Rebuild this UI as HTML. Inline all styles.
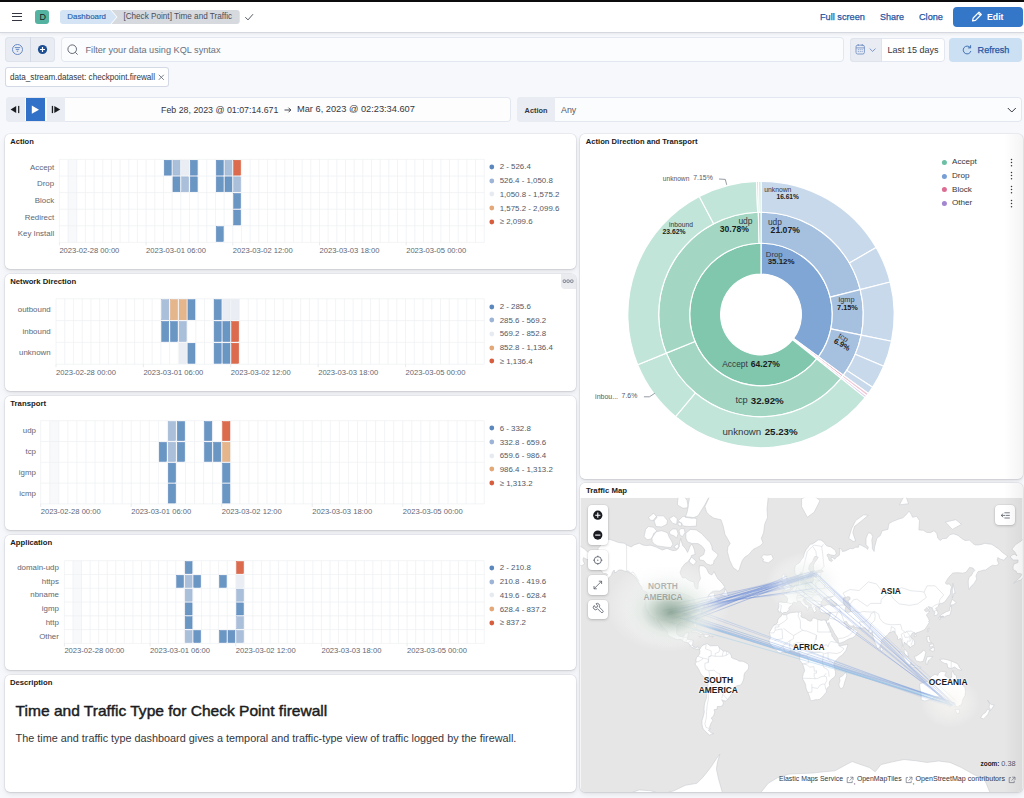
<!DOCTYPE html>
<html><head><meta charset="utf-8"><title>Dashboard</title><style>
*{box-sizing:border-box;margin:0;padding:0}
html,body{width:1024px;height:798px;overflow:hidden;background:#f7f8fc;font-family:"Liberation Sans",sans-serif;color:#343741;position:relative}
.a{position:absolute}
.t{position:absolute;white-space:nowrap}
svg{position:absolute;overflow:visible}
.panel{position:absolute;background:#fff;border-radius:5px;box-shadow:0 0 0 .6px rgba(120,130,150,.16),0 .8px 1.5px rgba(0,0,0,.07),0 2px 4px rgba(0,0,0,.05),0 4px 9px rgba(0,0,0,.04)}
</style></head><body>
<div class="a" style="left:0px;top:0px;width:1024px;height:2px;background:#0c0c0e"></div>
<div class="a" style="left:0px;top:2px;width:1024px;height:30.8px;background:#fff;border-bottom:1px solid #d5d8de;box-shadow:0 1px 3px rgba(0,0,0,.07)"></div>
<div class="a" style="left:12.3px;top:12.75px;width:9.9px;height:1.1px;background:#343741"></div>
<div class="a" style="left:12.3px;top:16.35px;width:9.9px;height:1.1px;background:#343741"></div>
<div class="a" style="left:12.3px;top:20.05px;width:9.9px;height:1.1px;background:#343741"></div>
<div class="a" style="left:35.2px;top:9.9px;width:14.3px;height:14.2px;background:#54b3a0;border-radius:3px"></div>
<div class="t" style="left:39.5px;top:12.7px;font-size:9px;line-height:9px;color:#1a1c21;">D</div>
<svg class="a" style="left:0;top:0" width="260" height="32"><path d="M63 9.9 H110.5 L116.5 17 L110.5 24.1 H63 Q60 24.1 60 21.1 V12.9 Q60 9.9 63 9.9Z" fill="#d4e4f4"/><path d="M111.5 9.9 H236.7 Q239.7 9.9 239.7 12.9 V21.1 Q239.7 24.1 236.7 24.1 H111.5 L117.5 17Z" fill="#d6d9de"/><path d="M245.3 17.2 L248 19.9 L253 14.2" stroke="#535966" stroke-width="1" fill="none"/></svg>
<div class="t" style="left:67.3px;top:13.13px;font-size:7.91px;line-height:7.91px;color:#2a5fab;-webkit-text-stroke:.15px #2a5fab">Dashboard</div>
<div class="t" style="left:123.4px;top:13.01px;font-size:8.17px;line-height:8.17px;color:#4a4f5a;">[Check Point] Time and Traffic</div>
<div class="t" style="left:820px;top:13px;font-size:9.2px;line-height:9.2px;color:#1f56a3;-webkit-text-stroke:.25px #1f56a3">Full screen</div>
<div class="t" style="left:880px;top:13.11px;font-size:8.99px;line-height:8.99px;color:#1f56a3;-webkit-text-stroke:.25px #1f56a3">Share</div>
<div class="t" style="left:919px;top:13.02px;font-size:9.18px;line-height:9.18px;color:#1f56a3;-webkit-text-stroke:.25px #1f56a3">Clone</div>
<div class="a" style="left:953px;top:7.2px;width:69.5px;height:19.5px;background:#3476c8;border-radius:4px"></div>
<svg class="a" style="left:970px;top:11px" width="14" height="12"><path d="M2.5 9.8 L3.2 7 L9 1.2 L11.3 3.5 L5.5 9.3 Z M8 2.2 L10.3 4.5" stroke="#fff" stroke-width="1.2" fill="none" stroke-linejoin="round"/></svg>
<div class="t" style="left:987px;top:13.24px;font-size:8.73px;line-height:8.73px;color:#ffffff;font-weight:700;">Edit</div>
<div class="a" style="left:5px;top:37.2px;width:50.2px;height:24.8px;background:#e9edf3;border-radius:4px;box-shadow:inset 0 0 0 1px #dfe4ec"></div>
<div class="a" style="left:30.3px;top:37.2px;width:0.6px;height:24.8px;background:#d3dae6"></div>
<svg class="a" style="left:10px;top:42px" width="16" height="16"><circle cx="7.5" cy="7.5" r="5" stroke="#5a7fc0" stroke-width="0.9" fill="none"/><path d="M4.8 5.6 H10.2 M5.8 7.4 H9.2 M6.8 9.2 H8.2" stroke="#5a7fc0" stroke-width="0.9"/></svg>
<svg class="a" style="left:35px;top:42px" width="16" height="16"><circle cx="7.5" cy="7.5" r="4.6" fill="#1c4e93"/><path d="M7.5 5 V10 M5 7.5 H10" stroke="#fff" stroke-width="1.2"/></svg>
<div class="a" style="left:60.7px;top:37.2px;width:783px;height:24.8px;background:#fbfcfd;border-radius:4px;box-shadow:inset 0 0 0 1px #e3e8f0"></div>
<svg class="a" style="left:66px;top:43px" width="14" height="14"><circle cx="6.2" cy="6.2" r="4.3" stroke="#535966" stroke-width="0.9" fill="none"/><path d="M9.3 9.3 L11.6 11.6" stroke="#535966" stroke-width="0.9"/></svg>
<div class="t" style="left:85.5px;top:46.02px;font-size:9.17px;line-height:9.17px;color:#69707d;">Filter your data using KQL syntax</div>
<div class="a" style="left:850px;top:37.6px;width:94.5px;height:24.1px;background:#fff;border-radius:4px;box-shadow:inset 0 0 0 1px #e3e8f0"></div>
<div class="a" style="left:850px;top:37.6px;width:32px;height:24.1px;background:#e9edf3;border-radius:4px 0 0 4px;box-shadow:inset 0 0 0 1px #dfe4ec"></div>
<svg class="a" style="left:853px;top:43px" width="28" height="14"><rect x="3" y="2.2" width="8.4" height="8.8" rx="1.6" stroke="#6d8bc2" stroke-width="0.85" fill="none"/><path d="M3 4.9 H11.4 M5.2 1 V3 M9.2 1 V3" stroke="#6d8bc2" stroke-width="0.85"/><path d="M4.8 6.7h1.1M6.7 6.7h1.1M8.6 6.7h1.1M4.8 8.6h1.1M6.7 8.6h1.1M8.6 8.6h1.1" stroke="#6d8bc2" stroke-width="0.8"/><path d="M16.7 5.6 L19.6 8.4 L22.5 5.6" stroke="#6d8bc2" stroke-width="0.9" fill="none"/></svg>
<div class="t" style="left:887.5px;top:45.71px;font-size:8.99px;line-height:8.99px;color:#343741;">Last 15 days</div>
<div class="a" style="left:949.4px;top:37.6px;width:73.1px;height:24.1px;background:#cce0f3;border-radius:4px"></div>
<svg class="a" style="left:961px;top:44px" width="12" height="12"><path d="M9.2 3.6 A3.9 3.9 0 1 0 9.9 7" stroke="#2a5ea8" stroke-width="0.85" fill="none"/><path d="M9.6 1.2 V3.9 H6.9" stroke="#2a5ea8" stroke-width="0.85" fill="none"/></svg>
<div class="t" style="left:977.6px;top:45.56px;font-size:9.09px;line-height:9.09px;color:#1f56a3;-webkit-text-stroke:.25px #1f56a3">Refresh</div>
<div class="a" style="left:5.3px;top:67.4px;width:164.2px;height:19.4px;background:#fff;border-radius:3px;box-shadow:inset 0 0 0 1px #d3dae6"></div>
<div class="t" style="left:10px;top:73.93px;font-size:8.13px;line-height:8.13px;color:#343741;">data_stream.dataset: checkpoint.firewall</div>
<svg class="a" style="left:157px;top:73px" width="9" height="9"><path d="M1.8 1.8 L6.8 6.8 M6.8 1.8 L1.8 6.8" stroke="#69707d" stroke-width="0.9"/></svg>
<div class="a" style="left:5.5px;top:97.2px;width:505.2px;height:24.5px;background:#fdfdfe;border-radius:4px;box-shadow:inset 0 0 0 1px #e3e8f0"></div>
<div class="a" style="left:5.5px;top:97.2px;width:19.1px;height:24.5px;background:#e9edf3;border-radius:4px 0 0 4px"></div>
<div class="a" style="left:25.9px;top:97.8px;width:19px;height:23.1px;background:#3271c8"></div>
<div class="a" style="left:46.5px;top:97.2px;width:18.5px;height:24.5px;background:#e9edf3"></div>
<svg class="a" style="left:5px;top:97px" width="62" height="25"><path d="M5.6 12.5 L11.2 8.9 V16.1 Z" fill="#1a1c21"/><rect x="13.1" y="8.9" width="1.2" height="7.2" fill="#1a1c21"/><path d="M26.8 8.6 L34 12.7 L26.8 16.75 Z" fill="#fff"/><rect x="46.8" y="8.9" width="1.3" height="7.2" fill="#1a1c21"/><path d="M49.3 8.9 L55.25 12.5 L49.3 16.1 Z" fill="#1a1c21"/></svg>
<div class="t" style="left:161px;top:105.69px;font-size:8.83px;line-height:8.83px;color:#343741;">Feb 28, 2023 @ 01:07:14.671</div>
<svg class="a" style="left:282px;top:106px" width="12" height="8"><path d="M2.5 4 H8.8 M6.5 1.7 L8.8 4 L6.5 6.3" stroke="#343741" stroke-width="0.9" fill="none"/></svg>
<div class="t" style="left:297px;top:105.48px;font-size:9.26px;line-height:9.26px;color:#343741;">Mar 6, 2023 @ 02:23:34.607</div>
<div class="a" style="left:516.6px;top:97.2px;width:505.7px;height:24.5px;background:#fbfcfd;border-radius:4px;box-shadow:inset 0 0 0 1px #e3e8f0"></div>
<div class="a" style="left:516.6px;top:97.2px;width:38.2px;height:24.5px;background:#e9edf3;border-radius:4px 0 0 4px"></div>
<div class="t" style="left:524.6px;top:106.52px;font-size:7.33px;line-height:7.33px;color:#343741;font-weight:700;">Action</div>
<div class="t" style="left:561px;top:105.67px;font-size:8.87px;line-height:8.87px;color:#535966;">Any</div>
<svg class="a" style="left:1006px;top:105.6px" width="12" height="9"><path d="M1.8 2 L5.8 6 L9.8 2" stroke="#343741" stroke-width="1" fill="none"/></svg>
<div class="panel" style="left:4.8px;top:134px;width:571.1px;height:135.1px"></div>
<div class="t" style="left:10.3px;top:138.41px;font-size:7.56px;line-height:7.56px;color:#1a1c21;font-weight:700;">Action</div>
<svg class="a" style="left:0;top:0" width="1024" height="798"><rect x="68.07" y="159.4" width="8.67" height="83" fill="#f8f9fb"/><path d="M59.4 159.4V242.4M68.07 159.4V242.4M76.74 159.4V242.4M85.41 159.4V242.4M94.08 159.4V242.4M102.75 159.4V242.4M111.42 159.4V242.4M120.09 159.4V242.4M128.76 159.4V242.4M137.42 159.4V242.4M146.09 159.4V242.4M154.76 159.4V242.4M163.43 159.4V242.4M172.1 159.4V242.4M180.77 159.4V242.4M189.44 159.4V242.4M198.11 159.4V242.4M206.78 159.4V242.4M215.45 159.4V242.4M224.12 159.4V242.4M232.79 159.4V242.4M241.46 159.4V242.4M250.13 159.4V242.4M258.8 159.4V242.4M267.47 159.4V242.4M276.13 159.4V242.4M284.8 159.4V242.4M293.47 159.4V242.4M302.14 159.4V242.4M310.81 159.4V242.4M319.48 159.4V242.4M328.15 159.4V242.4M336.82 159.4V242.4M345.49 159.4V242.4M354.16 159.4V242.4M362.83 159.4V242.4M371.5 159.4V242.4M380.17 159.4V242.4M388.84 159.4V242.4M397.51 159.4V242.4M406.18 159.4V242.4M414.84 159.4V242.4M423.51 159.4V242.4M432.18 159.4V242.4M440.85 159.4V242.4M449.52 159.4V242.4M458.19 159.4V242.4M466.86 159.4V242.4M475.53 159.4V242.4M484.2 159.4V242.4M59.4 159.4H484.2M59.4 176H484.2M59.4 192.6H484.2M59.4 209.2H484.2M59.4 225.8H484.2M59.4 242.4H484.2" stroke="#edf0f3" stroke-width="0.75" fill="none"/><path d="M59.4 242.4V245.4M146.09 242.4V245.4M232.79 242.4V245.4M319.48 242.4V245.4M406.18 242.4V245.4" stroke="#e3e6ea" stroke-width="0.8"/><rect x="164.28" y="160.25" width="6.97" height="14.9" fill="#6a96c4" stroke="#5c88bd" stroke-width=".5"/><rect x="172.95" y="160.25" width="6.97" height="14.9" fill="#a9bfda" stroke="#9db4d4" stroke-width=".5"/><rect x="181.62" y="160.25" width="6.97" height="14.9" fill="#eaeef4" stroke="#e2e7ef" stroke-width=".5"/><rect x="190.29" y="160.25" width="6.97" height="14.9" fill="#6a96c4" stroke="#5c88bd" stroke-width=".5"/><rect x="216.3" y="160.25" width="6.97" height="14.9" fill="#6a96c4" stroke="#5c88bd" stroke-width=".5"/><rect x="224.97" y="160.25" width="6.97" height="14.9" fill="#a9bfda" stroke="#9db4d4" stroke-width=".5"/><rect x="233.64" y="160.25" width="6.97" height="14.9" fill="#dc6a4c" stroke="#d45a3c" stroke-width=".5"/><rect x="172.95" y="176.85" width="6.97" height="14.9" fill="#6a96c4" stroke="#5c88bd" stroke-width=".5"/><rect x="181.62" y="176.85" width="6.97" height="14.9" fill="#a9bfda" stroke="#9db4d4" stroke-width=".5"/><rect x="190.29" y="176.85" width="6.97" height="14.9" fill="#6a96c4" stroke="#5c88bd" stroke-width=".5"/><rect x="216.3" y="176.85" width="6.97" height="14.9" fill="#6a96c4" stroke="#5c88bd" stroke-width=".5"/><rect x="224.97" y="176.85" width="6.97" height="14.9" fill="#6a96c4" stroke="#5c88bd" stroke-width=".5"/><rect x="233.64" y="176.85" width="6.97" height="14.9" fill="#a9bfda" stroke="#9db4d4" stroke-width=".5"/><rect x="233.64" y="193.45" width="6.97" height="14.9" fill="#6a96c4" stroke="#5c88bd" stroke-width=".5"/><rect x="233.64" y="210.05" width="6.97" height="14.9" fill="#6a96c4" stroke="#5c88bd" stroke-width=".5"/><rect x="216.3" y="226.65" width="6.97" height="14.9" fill="#6a96c4" stroke="#5c88bd" stroke-width=".5"/></svg>
<div class="t" style="left:30.07px;top:163.84px;font-size:7.9px;line-height:7.9px;color:#616773;">Accept</div>
<div class="t" style="left:37.06px;top:180.44px;font-size:7.9px;line-height:7.9px;color:#616773;">Drop</div>
<div class="t" style="left:34.84px;top:197.04px;font-size:7.9px;line-height:7.9px;color:#616773;">Block</div>
<div class="t" style="left:24.77px;top:213.64px;font-size:7.9px;line-height:7.9px;color:#616773;">Redirect</div>
<div class="t" style="left:17.74px;top:230.24px;font-size:7.9px;line-height:7.9px;color:#616773;">Key Install</div>
<div class="t" style="left:59.4px;top:246.69px;font-size:7.6px;line-height:7.6px;color:#616773;">2023-02-28 00:00</div>
<div class="t" style="left:146.09px;top:246.69px;font-size:7.6px;line-height:7.6px;color:#616773;">2023-03-01 06:00</div>
<div class="t" style="left:232.79px;top:246.69px;font-size:7.6px;line-height:7.6px;color:#616773;">2023-03-02 12:00</div>
<div class="t" style="left:319.48px;top:246.69px;font-size:7.6px;line-height:7.6px;color:#616773;">2023-03-03 18:00</div>
<div class="t" style="left:406.18px;top:246.69px;font-size:7.6px;line-height:7.6px;color:#616773;">2023-03-05 00:00</div>
<svg class="a" style="left:488px;top:162.9px" width="8" height="8"><circle cx="3.8" cy="4" r="2.4" fill="#5b87bd"/></svg>
<div class="t" style="left:499.7px;top:163.44px;font-size:7.9px;line-height:7.9px;color:#535966;">2 - 526.4</div>
<svg class="a" style="left:488px;top:176.7px" width="8" height="8"><circle cx="3.8" cy="4" r="2.4" fill="#9db4d6"/></svg>
<div class="t" style="left:499.7px;top:177.24px;font-size:7.9px;line-height:7.9px;color:#535966;">526.4 - 1,050.8</div>
<svg class="a" style="left:488px;top:190.4px" width="8" height="8"><circle cx="3.8" cy="4" r="2.4" fill="#e6ebf2"/></svg>
<div class="t" style="left:499.7px;top:190.94px;font-size:7.9px;line-height:7.9px;color:#535966;">1,050.8 - 1,575.2</div>
<svg class="a" style="left:488px;top:204.2px" width="8" height="8"><circle cx="3.8" cy="4" r="2.4" fill="#e2a878"/></svg>
<div class="t" style="left:499.7px;top:204.74px;font-size:7.9px;line-height:7.9px;color:#535966;">1,575.2 - 2,099.6</div>
<svg class="a" style="left:488px;top:217.7px" width="8" height="8"><circle cx="3.8" cy="4" r="2.4" fill="#d65e3e"/></svg>
<div class="t" style="left:499.7px;top:218.24px;font-size:7.9px;line-height:7.9px;color:#535966;">≥ 2,099.6</div>
<div class="panel" style="left:4.8px;top:273.75px;width:571.1px;height:117.25px"></div>
<div class="t" style="left:10.3px;top:277.64px;font-size:7.7px;line-height:7.7px;color:#1a1c21;font-weight:700;">Network Direction</div>
<div class="a" style="left:561px;top:273.75px;width:14.5px;height:14.85px;background:#e9ebef;border-radius:0 5px 0 4px"></div>
<svg class="a" style="left:562px;top:279px" width="13" height="5"><rect x="1.2" y="0.9" width="2.4" height="2.6" rx="0.6" stroke="#69707d" stroke-width="0.8" fill="none"/><rect x="4.9" y="0.9" width="2.4" height="2.6" rx="0.6" stroke="#69707d" stroke-width="0.8" fill="none"/><rect x="8.6" y="0.9" width="2.4" height="2.6" rx="0.6" stroke="#69707d" stroke-width="0.8" fill="none"/></svg>
<svg class="a" style="left:0;top:0" width="1024" height="798"><path d="M56 298.8V364.2M64.74 298.8V364.2M73.48 298.8V364.2M82.22 298.8V364.2M90.96 298.8V364.2M99.69 298.8V364.2M108.43 298.8V364.2M117.17 298.8V364.2M125.91 298.8V364.2M134.65 298.8V364.2M143.39 298.8V364.2M152.13 298.8V364.2M160.87 298.8V364.2M169.6 298.8V364.2M178.34 298.8V364.2M187.08 298.8V364.2M195.82 298.8V364.2M204.56 298.8V364.2M213.3 298.8V364.2M222.04 298.8V364.2M230.78 298.8V364.2M239.51 298.8V364.2M248.25 298.8V364.2M256.99 298.8V364.2M265.73 298.8V364.2M274.47 298.8V364.2M283.21 298.8V364.2M291.95 298.8V364.2M300.69 298.8V364.2M309.42 298.8V364.2M318.16 298.8V364.2M326.9 298.8V364.2M335.64 298.8V364.2M344.38 298.8V364.2M353.12 298.8V364.2M361.86 298.8V364.2M370.6 298.8V364.2M379.33 298.8V364.2M388.07 298.8V364.2M396.81 298.8V364.2M405.55 298.8V364.2M414.29 298.8V364.2M423.03 298.8V364.2M431.77 298.8V364.2M440.51 298.8V364.2M449.24 298.8V364.2M457.98 298.8V364.2M466.72 298.8V364.2M475.46 298.8V364.2M484.2 298.8V364.2M56 298.8H484.2M56 320.6H484.2M56 342.4H484.2M56 364.2H484.2" stroke="#edf0f3" stroke-width="0.75" fill="none"/><path d="M56 364.2V367.2M143.39 364.2V367.2M230.78 364.2V367.2M318.16 364.2V367.2M405.55 364.2V367.2" stroke="#e3e6ea" stroke-width="0.8"/><rect x="161.72" y="299.65" width="7.04" height="20.1" fill="#a9bfda" stroke="#9db4d4" stroke-width=".5"/><rect x="170.45" y="299.65" width="7.04" height="20.1" fill="#e5b58c" stroke="#dca67a" stroke-width=".5"/><rect x="179.19" y="299.65" width="7.04" height="20.1" fill="#e5b58c" stroke="#dca67a" stroke-width=".5"/><rect x="187.93" y="299.65" width="7.04" height="20.1" fill="#6a96c4" stroke="#5c88bd" stroke-width=".5"/><rect x="214.15" y="299.65" width="7.04" height="20.1" fill="#6a96c4" stroke="#5c88bd" stroke-width=".5"/><rect x="222.89" y="299.65" width="7.04" height="20.1" fill="#eaeef4" stroke="#e2e7ef" stroke-width=".5"/><rect x="231.63" y="299.65" width="7.04" height="20.1" fill="#eaeef4" stroke="#e2e7ef" stroke-width=".5"/><rect x="161.72" y="321.45" width="7.04" height="20.1" fill="#6a96c4" stroke="#5c88bd" stroke-width=".5"/><rect x="170.45" y="321.45" width="7.04" height="20.1" fill="#6a96c4" stroke="#5c88bd" stroke-width=".5"/><rect x="179.19" y="321.45" width="7.04" height="20.1" fill="#a9bfda" stroke="#9db4d4" stroke-width=".5"/><rect x="214.15" y="321.45" width="7.04" height="20.1" fill="#6a96c4" stroke="#5c88bd" stroke-width=".5"/><rect x="222.89" y="321.45" width="7.04" height="20.1" fill="#6a96c4" stroke="#5c88bd" stroke-width=".5"/><rect x="231.63" y="321.45" width="7.04" height="20.1" fill="#dc6a4c" stroke="#d45a3c" stroke-width=".5"/><rect x="179.19" y="343.25" width="7.04" height="20.1" fill="#eaeef4" stroke="#e2e7ef" stroke-width=".5"/><rect x="187.93" y="343.25" width="7.04" height="20.1" fill="#6a96c4" stroke="#5c88bd" stroke-width=".5"/><rect x="214.15" y="343.25" width="7.04" height="20.1" fill="#6a96c4" stroke="#5c88bd" stroke-width=".5"/><rect x="222.89" y="343.25" width="7.04" height="20.1" fill="#6a96c4" stroke="#5c88bd" stroke-width=".5"/><rect x="231.63" y="343.25" width="7.04" height="20.1" fill="#dc6a4c" stroke="#d45a3c" stroke-width=".5"/></svg>
<div class="t" style="left:17.76px;top:305.84px;font-size:7.9px;line-height:7.9px;color:#616773;">outbound</div>
<div class="t" style="left:22.58px;top:327.64px;font-size:7.9px;line-height:7.9px;color:#616773;">inbound</div>
<div class="t" style="left:19.06px;top:349.44px;font-size:7.9px;line-height:7.9px;color:#616773;">unknown</div>
<div class="t" style="left:56px;top:368.79px;font-size:7.6px;line-height:7.6px;color:#616773;">2023-02-28 00:00</div>
<div class="t" style="left:143.39px;top:368.79px;font-size:7.6px;line-height:7.6px;color:#616773;">2023-03-01 06:00</div>
<div class="t" style="left:230.78px;top:368.79px;font-size:7.6px;line-height:7.6px;color:#616773;">2023-03-02 12:00</div>
<div class="t" style="left:318.16px;top:368.79px;font-size:7.6px;line-height:7.6px;color:#616773;">2023-03-03 18:00</div>
<div class="t" style="left:405.55px;top:368.79px;font-size:7.6px;line-height:7.6px;color:#616773;">2023-03-05 00:00</div>
<svg class="a" style="left:488px;top:302.6px" width="8" height="8"><circle cx="3.8" cy="4" r="2.4" fill="#5b87bd"/></svg>
<div class="t" style="left:499.7px;top:303.14px;font-size:7.9px;line-height:7.9px;color:#535966;">2 - 285.6</div>
<svg class="a" style="left:488px;top:316.1px" width="8" height="8"><circle cx="3.8" cy="4" r="2.4" fill="#9db4d6"/></svg>
<div class="t" style="left:499.7px;top:316.64px;font-size:7.9px;line-height:7.9px;color:#535966;">285.6 - 569.2</div>
<svg class="a" style="left:488px;top:329.9px" width="8" height="8"><circle cx="3.8" cy="4" r="2.4" fill="#e6ebf2"/></svg>
<div class="t" style="left:499.7px;top:330.44px;font-size:7.9px;line-height:7.9px;color:#535966;">569.2 - 852.8</div>
<svg class="a" style="left:488px;top:343.6px" width="8" height="8"><circle cx="3.8" cy="4" r="2.4" fill="#e2a878"/></svg>
<div class="t" style="left:499.7px;top:344.14px;font-size:7.9px;line-height:7.9px;color:#535966;">852.8 - 1,136.4</div>
<svg class="a" style="left:488px;top:357.1px" width="8" height="8"><circle cx="3.8" cy="4" r="2.4" fill="#d65e3e"/></svg>
<div class="t" style="left:499.7px;top:357.64px;font-size:7.9px;line-height:7.9px;color:#535966;">≥ 1,136.4</div>
<div class="panel" style="left:4.8px;top:395.9px;width:571.1px;height:133.7px"></div>
<div class="t" style="left:10.3px;top:399.72px;font-size:7.74px;line-height:7.74px;color:#1a1c21;font-weight:700;">Transport</div>
<svg class="a" style="left:0;top:0" width="1024" height="798"><rect x="49.75" y="420.7" width="9.05" height="83.2" fill="#f8f9fb"/><path d="M40.7 420.7V503.9M49.75 420.7V503.9M58.8 420.7V503.9M67.85 420.7V503.9M76.9 420.7V503.9M85.96 420.7V503.9M95.01 420.7V503.9M104.06 420.7V503.9M113.11 420.7V503.9M122.16 420.7V503.9M131.21 420.7V503.9M140.26 420.7V503.9M149.31 420.7V503.9M158.36 420.7V503.9M167.41 420.7V503.9M176.47 420.7V503.9M185.52 420.7V503.9M194.57 420.7V503.9M203.62 420.7V503.9M212.67 420.7V503.9M221.72 420.7V503.9M230.77 420.7V503.9M239.82 420.7V503.9M248.87 420.7V503.9M257.92 420.7V503.9M266.98 420.7V503.9M276.03 420.7V503.9M285.08 420.7V503.9M294.13 420.7V503.9M303.18 420.7V503.9M312.23 420.7V503.9M321.28 420.7V503.9M330.33 420.7V503.9M339.38 420.7V503.9M348.43 420.7V503.9M357.49 420.7V503.9M366.54 420.7V503.9M375.59 420.7V503.9M384.64 420.7V503.9M393.69 420.7V503.9M402.74 420.7V503.9M411.79 420.7V503.9M420.84 420.7V503.9M429.89 420.7V503.9M438.94 420.7V503.9M448 420.7V503.9M457.05 420.7V503.9M466.1 420.7V503.9M475.15 420.7V503.9M484.2 420.7V503.9M40.7 420.7H484.2M40.7 441.5H484.2M40.7 462.3H484.2M40.7 483.1H484.2M40.7 503.9H484.2" stroke="#edf0f3" stroke-width="0.75" fill="none"/><path d="M40.7 503.9V506.9M131.21 503.9V506.9M221.72 503.9V506.9M312.23 503.9V506.9M402.74 503.9V506.9" stroke="#e3e6ea" stroke-width="0.8"/><rect x="168.26" y="421.55" width="7.35" height="19.1" fill="#a9bfda" stroke="#9db4d4" stroke-width=".5"/><rect x="177.32" y="421.55" width="7.35" height="19.1" fill="#6a96c4" stroke="#5c88bd" stroke-width=".5"/><rect x="204.47" y="421.55" width="7.35" height="19.1" fill="#6a96c4" stroke="#5c88bd" stroke-width=".5"/><rect x="222.57" y="421.55" width="7.35" height="19.1" fill="#dc6a4c" stroke="#d45a3c" stroke-width=".5"/><rect x="159.21" y="442.35" width="7.35" height="19.1" fill="#6a96c4" stroke="#5c88bd" stroke-width=".5"/><rect x="168.26" y="442.35" width="7.35" height="19.1" fill="#a9bfda" stroke="#9db4d4" stroke-width=".5"/><rect x="177.32" y="442.35" width="7.35" height="19.1" fill="#6a96c4" stroke="#5c88bd" stroke-width=".5"/><rect x="204.47" y="442.35" width="7.35" height="19.1" fill="#6a96c4" stroke="#5c88bd" stroke-width=".5"/><rect x="213.52" y="442.35" width="7.35" height="19.1" fill="#6a96c4" stroke="#5c88bd" stroke-width=".5"/><rect x="222.57" y="442.35" width="7.35" height="19.1" fill="#e5b58c" stroke="#dca67a" stroke-width=".5"/><rect x="168.26" y="463.15" width="7.35" height="19.1" fill="#6a96c4" stroke="#5c88bd" stroke-width=".5"/><rect x="222.57" y="463.15" width="7.35" height="19.1" fill="#6a96c4" stroke="#5c88bd" stroke-width=".5"/><rect x="168.26" y="483.95" width="7.35" height="19.1" fill="#6a96c4" stroke="#5c88bd" stroke-width=".5"/><rect x="222.57" y="483.95" width="7.35" height="19.1" fill="#6a96c4" stroke="#5c88bd" stroke-width=".5"/></svg>
<div class="t" style="left:22.81px;top:427.24px;font-size:7.9px;line-height:7.9px;color:#616773;">udp</div>
<div class="t" style="left:25.45px;top:448.04px;font-size:7.9px;line-height:7.9px;color:#616773;">tcp</div>
<div class="t" style="left:18.86px;top:468.84px;font-size:7.9px;line-height:7.9px;color:#616773;">igmp</div>
<div class="t" style="left:19.33px;top:489.64px;font-size:7.9px;line-height:7.9px;color:#616773;">icmp</div>
<div class="t" style="left:40.7px;top:507.89px;font-size:7.6px;line-height:7.6px;color:#616773;">2023-02-28 00:00</div>
<div class="t" style="left:131.21px;top:507.89px;font-size:7.6px;line-height:7.6px;color:#616773;">2023-03-01 06:00</div>
<div class="t" style="left:221.72px;top:507.89px;font-size:7.6px;line-height:7.6px;color:#616773;">2023-03-02 12:00</div>
<div class="t" style="left:312.23px;top:507.89px;font-size:7.6px;line-height:7.6px;color:#616773;">2023-03-03 18:00</div>
<div class="t" style="left:402.74px;top:507.89px;font-size:7.6px;line-height:7.6px;color:#616773;">2023-03-05 00:00</div>
<svg class="a" style="left:488px;top:424.4px" width="8" height="8"><circle cx="3.8" cy="4" r="2.4" fill="#5b87bd"/></svg>
<div class="t" style="left:499.7px;top:424.94px;font-size:7.9px;line-height:7.9px;color:#535966;">6 - 332.8</div>
<svg class="a" style="left:488px;top:438.2px" width="8" height="8"><circle cx="3.8" cy="4" r="2.4" fill="#9db4d6"/></svg>
<div class="t" style="left:499.7px;top:438.74px;font-size:7.9px;line-height:7.9px;color:#535966;">332.8 - 659.6</div>
<svg class="a" style="left:488px;top:451.9px" width="8" height="8"><circle cx="3.8" cy="4" r="2.4" fill="#e6ebf2"/></svg>
<div class="t" style="left:499.7px;top:452.44px;font-size:7.9px;line-height:7.9px;color:#535966;">659.6 - 986.4</div>
<svg class="a" style="left:488px;top:465.4px" width="8" height="8"><circle cx="3.8" cy="4" r="2.4" fill="#e2a878"/></svg>
<div class="t" style="left:499.7px;top:465.94px;font-size:7.9px;line-height:7.9px;color:#535966;">986.4 - 1,313.2</div>
<svg class="a" style="left:488px;top:479.2px" width="8" height="8"><circle cx="3.8" cy="4" r="2.4" fill="#d65e3e"/></svg>
<div class="t" style="left:499.7px;top:479.74px;font-size:7.9px;line-height:7.9px;color:#535966;">≥ 1,313.2</div>
<div class="panel" style="left:4.8px;top:535px;width:571.1px;height:134.6px"></div>
<div class="t" style="left:10.3px;top:539.14px;font-size:7.7px;line-height:7.7px;color:#1a1c21;font-weight:700;">Application</div>
<svg class="a" style="left:0;top:0" width="1024" height="798"><rect x="72.97" y="560.7" width="8.57" height="82.7" fill="#f8f9fb"/><path d="M64.4 560.7V643.4M72.97 560.7V643.4M81.53 560.7V643.4M90.1 560.7V643.4M98.67 560.7V643.4M107.24 560.7V643.4M115.8 560.7V643.4M124.37 560.7V643.4M132.94 560.7V643.4M141.51 560.7V643.4M150.07 560.7V643.4M158.64 560.7V643.4M167.21 560.7V643.4M175.78 560.7V643.4M184.34 560.7V643.4M192.91 560.7V643.4M201.48 560.7V643.4M210.04 560.7V643.4M218.61 560.7V643.4M227.18 560.7V643.4M235.75 560.7V643.4M244.31 560.7V643.4M252.88 560.7V643.4M261.45 560.7V643.4M270.02 560.7V643.4M278.58 560.7V643.4M287.15 560.7V643.4M295.72 560.7V643.4M304.29 560.7V643.4M312.85 560.7V643.4M321.42 560.7V643.4M329.99 560.7V643.4M338.56 560.7V643.4M347.12 560.7V643.4M355.69 560.7V643.4M364.26 560.7V643.4M372.82 560.7V643.4M381.39 560.7V643.4M389.96 560.7V643.4M398.53 560.7V643.4M407.09 560.7V643.4M415.66 560.7V643.4M424.23 560.7V643.4M432.8 560.7V643.4M441.36 560.7V643.4M449.93 560.7V643.4M458.5 560.7V643.4M467.07 560.7V643.4M475.63 560.7V643.4M484.2 560.7V643.4M64.4 560.7H484.2M64.4 574.48H484.2M64.4 588.27H484.2M64.4 602.05H484.2M64.4 615.83H484.2M64.4 629.62H484.2M64.4 643.4H484.2" stroke="#edf0f3" stroke-width="0.75" fill="none"/><path d="M64.4 643.4V646.4M150.07 643.4V646.4M235.75 643.4V646.4M321.42 643.4V646.4M407.09 643.4V646.4" stroke="#e3e6ea" stroke-width="0.8"/><rect x="185.19" y="561.55" width="6.87" height="12.08" fill="#6a96c4" stroke="#5c88bd" stroke-width=".5"/><rect x="236.6" y="561.55" width="6.87" height="12.08" fill="#dc6a4c" stroke="#d45a3c" stroke-width=".5"/><rect x="176.63" y="575.33" width="6.87" height="12.08" fill="#6a96c4" stroke="#5c88bd" stroke-width=".5"/><rect x="185.19" y="575.33" width="6.87" height="12.08" fill="#a9bfda" stroke="#9db4d4" stroke-width=".5"/><rect x="193.76" y="575.33" width="6.87" height="12.08" fill="#6a96c4" stroke="#5c88bd" stroke-width=".5"/><rect x="219.46" y="575.33" width="6.87" height="12.08" fill="#6a96c4" stroke="#5c88bd" stroke-width=".5"/><rect x="236.6" y="575.33" width="6.87" height="12.08" fill="#eaeef4" stroke="#e2e7ef" stroke-width=".5"/><rect x="185.19" y="589.12" width="6.87" height="12.08" fill="#a9bfda" stroke="#9db4d4" stroke-width=".5"/><rect x="236.6" y="589.12" width="6.87" height="12.08" fill="#a9bfda" stroke="#9db4d4" stroke-width=".5"/><rect x="185.19" y="602.9" width="6.87" height="12.08" fill="#6a96c4" stroke="#5c88bd" stroke-width=".5"/><rect x="236.6" y="602.9" width="6.87" height="12.08" fill="#6a96c4" stroke="#5c88bd" stroke-width=".5"/><rect x="185.19" y="616.68" width="6.87" height="12.08" fill="#6a96c4" stroke="#5c88bd" stroke-width=".5"/><rect x="236.6" y="616.68" width="6.87" height="12.08" fill="#a9bfda" stroke="#9db4d4" stroke-width=".5"/><rect x="185.19" y="630.47" width="6.87" height="12.08" fill="#a9bfda" stroke="#9db4d4" stroke-width=".5"/><rect x="193.76" y="630.47" width="6.87" height="12.08" fill="#6a96c4" stroke="#5c88bd" stroke-width=".5"/><rect x="219.46" y="630.47" width="6.87" height="12.08" fill="#6a96c4" stroke="#5c88bd" stroke-width=".5"/><rect x="228.03" y="630.47" width="6.87" height="12.08" fill="#6a96c4" stroke="#5c88bd" stroke-width=".5"/><rect x="236.6" y="630.47" width="6.87" height="12.08" fill="#a9bfda" stroke="#9db4d4" stroke-width=".5"/></svg>
<div class="t" style="left:17.19px;top:563.73px;font-size:7.9px;line-height:7.9px;color:#616773;">domain-udp</div>
<div class="t" style="left:41.76px;top:577.52px;font-size:7.9px;line-height:7.9px;color:#616773;">https</div>
<div class="t" style="left:30.34px;top:591.3px;font-size:7.9px;line-height:7.9px;color:#616773;">nbname</div>
<div class="t" style="left:41.76px;top:605.08px;font-size:7.9px;line-height:7.9px;color:#616773;">igmp</div>
<div class="t" style="left:45.71px;top:618.87px;font-size:7.9px;line-height:7.9px;color:#616773;">http</div>
<div class="t" style="left:39.15px;top:632.65px;font-size:7.9px;line-height:7.9px;color:#616773;">Other</div>
<div class="t" style="left:64.4px;top:647.29px;font-size:7.6px;line-height:7.6px;color:#616773;">2023-02-28 00:00</div>
<div class="t" style="left:150.07px;top:647.29px;font-size:7.6px;line-height:7.6px;color:#616773;">2023-03-01 06:00</div>
<div class="t" style="left:235.75px;top:647.29px;font-size:7.6px;line-height:7.6px;color:#616773;">2023-03-02 12:00</div>
<div class="t" style="left:321.42px;top:647.29px;font-size:7.6px;line-height:7.6px;color:#616773;">2023-03-03 18:00</div>
<div class="t" style="left:407.09px;top:647.29px;font-size:7.6px;line-height:7.6px;color:#616773;">2023-03-05 00:00</div>
<svg class="a" style="left:488px;top:563.8px" width="8" height="8"><circle cx="3.8" cy="4" r="2.4" fill="#5b87bd"/></svg>
<div class="t" style="left:499.7px;top:564.34px;font-size:7.9px;line-height:7.9px;color:#535966;">2 - 210.8</div>
<svg class="a" style="left:488px;top:577.6px" width="8" height="8"><circle cx="3.8" cy="4" r="2.4" fill="#9db4d6"/></svg>
<div class="t" style="left:499.7px;top:578.14px;font-size:7.9px;line-height:7.9px;color:#535966;">210.8 - 419.6</div>
<svg class="a" style="left:488px;top:591.3px" width="8" height="8"><circle cx="3.8" cy="4" r="2.4" fill="#e6ebf2"/></svg>
<div class="t" style="left:499.7px;top:591.84px;font-size:7.9px;line-height:7.9px;color:#535966;">419.6 - 628.4</div>
<svg class="a" style="left:488px;top:605.1px" width="8" height="8"><circle cx="3.8" cy="4" r="2.4" fill="#e2a878"/></svg>
<div class="t" style="left:499.7px;top:605.64px;font-size:7.9px;line-height:7.9px;color:#535966;">628.4 - 837.2</div>
<svg class="a" style="left:488px;top:618.9px" width="8" height="8"><circle cx="3.8" cy="4" r="2.4" fill="#d65e3e"/></svg>
<div class="t" style="left:499.7px;top:619.44px;font-size:7.9px;line-height:7.9px;color:#535966;">≥ 837.2</div>
<div class="panel" style="left:4.8px;top:674.9px;width:571.1px;height:116.7px"></div>
<div class="t" style="left:9.9px;top:678.83px;font-size:7.73px;line-height:7.73px;color:#1a1c21;font-weight:700;">Description</div>
<div class="t" style="left:15.6px;top:703.3px;font-size:15.55px;line-height:15.55px;color:#1a1c21;-webkit-text-stroke:.45px #1a1c21">Time and Traffic Type for Check Point firewall</div>
<div class="t" style="left:15.6px;top:732.81px;font-size:10.83px;line-height:10.83px;color:#343741;">The time and traffic type dashboard gives a temporal and traffic-type view of traffic logged by the firewall.</div>
<div class="panel" style="left:580.4px;top:134.2px;width:442.2px;height:344.6px"></div>
<div class="t" style="left:585.8px;top:138.18px;font-size:7.61px;line-height:7.61px;color:#1a1c21;font-weight:700;">Action Direction and Transport</div>
<svg class="a" style="left:0;top:0" width="1024" height="798"><path d="M761 243.2 A71.3 71.3 0 0 1 818.39 356.81 L793.52 338.47 A40.4 40.4 0 0 0 761 274.1 Z" fill="#7fa6d5" stroke="#fff" stroke-width="1.15" stroke-linejoin="round"/><path d="M818.39 356.81 A71.3 71.3 0 0 1 817.49 358 L793.01 339.15 A40.4 40.4 0 0 0 793.52 338.47 Z" fill="#e0759b" stroke="#fff" stroke-width="1.15" stroke-linejoin="round"/><path d="M817.49 358 A71.3 71.3 0 0 1 816.72 358.98 L792.57 339.7 A40.4 40.4 0 0 0 793.01 339.15 Z" fill="#a98bd0" stroke="#fff" stroke-width="1.15" stroke-linejoin="round"/><path d="M816.72 358.98 A71.3 71.3 0 1 1 761 243.2 L761 274.1 A40.4 40.4 0 1 0 792.57 339.7 Z" fill="#80c7ad" stroke="#fff" stroke-width="1.15" stroke-linejoin="round"/><path d="M761 212.2 A102.3 102.3 0 0 1 860.22 289.58 L830.15 297.13 A71.3 71.3 0 0 0 761 243.2 Z" fill="#a6c0e0" stroke="#fff" stroke-width="1.15" stroke-linejoin="round"/><path d="M860.22 289.58 A102.3 102.3 0 0 1 861.21 335.07 L830.84 328.84 A71.3 71.3 0 0 0 830.15 297.13 Z" fill="#a6c0e0" stroke="#fff" stroke-width="1.15" stroke-linejoin="round"/><path d="M861.21 335.07 A102.3 102.3 0 0 1 843.34 375.21 L818.39 356.81 A71.3 71.3 0 0 0 830.84 328.84 Z" fill="#a6c0e0" stroke="#fff" stroke-width="1.15" stroke-linejoin="round"/><path d="M843.34 375.21 A102.3 102.3 0 0 1 842.05 376.92 L817.49 358 A71.3 71.3 0 0 0 818.39 356.81 Z" fill="#eaa3bc" stroke="#fff" stroke-width="1.15" stroke-linejoin="round"/><path d="M842.05 376.92 A102.3 102.3 0 0 1 840.95 378.32 L816.72 358.98 A71.3 71.3 0 0 0 817.49 358 Z" fill="#c4afe0" stroke="#fff" stroke-width="1.15" stroke-linejoin="round"/><path d="M840.95 378.32 A102.3 102.3 0 0 1 666.28 353.15 L694.99 341.44 A71.3 71.3 0 0 0 816.72 358.98 Z" fill="#a3d7c4" stroke="#fff" stroke-width="1.15" stroke-linejoin="round"/><path d="M666.28 353.15 A102.3 102.3 0 0 1 758.32 212.24 L759.13 243.22 A71.3 71.3 0 0 0 694.99 341.44 Z" fill="#a3d7c4" stroke="#fff" stroke-width="1.15" stroke-linejoin="round"/><path d="M758.32 212.24 A102.3 102.3 0 0 1 761 212.2 L761 243.2 A71.3 71.3 0 0 0 759.13 243.22 Z" fill="#a3d7c4" stroke="#fff" stroke-width="1.15" stroke-linejoin="round"/><path d="M761 181.3 A133.2 133.2 0 0 1 876.12 247.5 L849.42 263.04 A102.3 102.3 0 0 0 761 212.2 Z" fill="#c9d9ec" stroke="#fff" stroke-width="1.15" stroke-linejoin="round"/><path d="M876.12 247.5 A133.2 133.2 0 0 1 890.19 282.05 L860.22 289.58 A102.3 102.3 0 0 0 849.42 263.04 Z" fill="#c9d9ec" stroke="#fff" stroke-width="1.15" stroke-linejoin="round"/><path d="M890.19 282.05 A133.2 133.2 0 0 1 891.48 341.28 L861.21 335.07 A102.3 102.3 0 0 0 860.22 289.58 Z" fill="#c9d9ec" stroke="#fff" stroke-width="1.15" stroke-linejoin="round"/><path d="M891.48 341.28 A133.2 133.2 0 0 1 883.7 366.33 L855.24 354.31 A102.3 102.3 0 0 0 861.21 335.07 Z" fill="#c9d9ec" stroke="#fff" stroke-width="1.15" stroke-linejoin="round"/><path d="M883.7 366.33 A133.2 133.2 0 0 1 872.58 387.24 L846.7 370.37 A102.3 102.3 0 0 0 855.24 354.31 Z" fill="#c9d9ec" stroke="#fff" stroke-width="1.15" stroke-linejoin="round"/><path d="M872.58 387.24 A133.2 133.2 0 0 1 868.21 393.54 L843.34 375.21 A102.3 102.3 0 0 0 846.7 370.37 Z" fill="#c9d9ec" stroke="#fff" stroke-width="1.15" stroke-linejoin="round"/><path d="M868.21 393.54 A133.2 133.2 0 0 1 866.53 395.77 L842.05 376.92 A102.3 102.3 0 0 0 843.34 375.21 Z" fill="#f1c6d5" stroke="#fff" stroke-width="1.15" stroke-linejoin="round"/><path d="M866.53 395.77 A133.2 133.2 0 0 1 865.1 397.6 L840.95 378.32 A102.3 102.3 0 0 0 842.05 376.92 Z" fill="#dccfee" stroke="#fff" stroke-width="1.15" stroke-linejoin="round"/><path d="M865.1 397.6 A133.2 133.2 0 0 1 675.56 416.69 L695.38 392.98 A102.3 102.3 0 0 0 840.95 378.32 Z" fill="#c1e5d8" stroke="#fff" stroke-width="1.15" stroke-linejoin="round"/><path d="M675.56 416.69 A133.2 133.2 0 0 1 637.67 364.83 L666.28 353.15 A102.3 102.3 0 0 0 695.38 392.98 Z" fill="#c1e5d8" stroke="#fff" stroke-width="1.15" stroke-linejoin="round"/><path d="M637.67 364.83 A133.2 133.2 0 0 1 699.29 196.46 L713.6 223.84 A102.3 102.3 0 0 0 666.28 353.15 Z" fill="#c1e5d8" stroke="#fff" stroke-width="1.15" stroke-linejoin="round"/><path d="M699.29 196.46 A133.2 133.2 0 0 1 756.58 181.37 L757.61 212.26 A102.3 102.3 0 0 0 713.6 223.84 Z" fill="#c1e5d8" stroke="#fff" stroke-width="1.15" stroke-linejoin="round"/><path d="M756.58 181.37 A133.2 133.2 0 0 1 758.68 181.32 L759.21 212.22 A102.3 102.3 0 0 0 757.61 212.26 Z" fill="#c1e5d8" stroke="#fff" stroke-width="1.15" stroke-linejoin="round"/><path d="M758.68 181.32 A133.2 133.2 0 0 1 761 181.3 L761 212.2 A102.3 102.3 0 0 0 759.21 212.22 Z" fill="#c1e5d8" stroke="#fff" stroke-width="1.15" stroke-linejoin="round"/><path d="M719 179 L725.3 179.4 L726.7 184.8" stroke="#69707d" stroke-width="0.7" fill="none"/><path d="M643.9 396.8 H649.4 L654.8 393.3" stroke="#69707d" stroke-width="0.7" fill="none"/></svg>
<div class="t" style="left:662.8px;top:175.56px;font-size:6.64px;line-height:6.64px;color:#535966;">unknown</div>
<div class="t" style="left:693.3px;top:175.44px;font-size:6.88px;line-height:6.88px;color:#535966;">7.15%</div>
<div class="t" style="left:595.1px;top:392.97px;font-size:7.01px;line-height:7.01px;color:#535966;">inbou...</div>
<div class="t" style="left:621.6px;top:393.04px;font-size:6.89px;line-height:6.89px;color:#535966;">7.6%</div>
<div class="t" style="left:764.3px;top:187.19px;font-size:6.77px;line-height:6.77px;color:#343741;">unknown</div>
<div class="t" style="left:776.5px;top:194.37px;font-size:6.61px;line-height:6.61px;color:#1a1c21;font-weight:700;">16.61%</div>
<div class="t" style="left:669.1px;top:221.72px;font-size:6.71px;line-height:6.71px;color:#343741;">inbound</div>
<div class="t" style="left:662.6px;top:228.99px;font-size:6.78px;line-height:6.78px;color:#1a1c21;font-weight:700;">23.62%</div>
<div class="t" style="left:738.4px;top:216.85px;font-size:8.5px;line-height:8.5px;color:#343741;">udp</div>
<div class="t" style="left:719.8px;top:225.31px;font-size:8.58px;line-height:8.58px;color:#1a1c21;font-weight:700;">30.78%</div>
<div class="t" style="left:768px;top:217.73px;font-size:8.32px;line-height:8.32px;color:#343741;">udp</div>
<div class="t" style="left:770.6px;top:226.28px;font-size:8.64px;line-height:8.64px;color:#1a1c21;font-weight:700;">21.07%</div>
<div class="t" style="left:765.8px;top:250.8px;font-size:7.79px;line-height:7.79px;color:#343741;">Drop</div>
<div class="t" style="left:767.7px;top:258.34px;font-size:7.91px;line-height:7.91px;color:#1a1c21;font-weight:700;">35.12%</div>
<div class="t" style="left:838.6px;top:295.9px;font-size:7.37px;line-height:7.37px;color:#343741;">igmp</div>
<div class="t" style="left:837.1px;top:303.82px;font-size:7.34px;line-height:7.34px;color:#1a1c21;font-weight:700;">7.15%</div>
<div class="t" style="left:837.5px;top:333.6px;font-size:7.6px;line-height:8px;color:#343741;transform:rotate(30deg);transform-origin:50% 50%">tcp</div>
<div class="t" style="left:832.5px;top:340.6px;font-size:7.6px;line-height:8px;color:#1a1c21;font-weight:700;transform:rotate(30deg);transform-origin:50% 50%">6.9%</div>
<div class="t" style="left:722.2px;top:360.31px;font-size:8.38px;line-height:8.38px;color:#343741;">Accept</div>
<div class="t" style="left:750.8px;top:360.21px;font-size:8.58px;line-height:8.58px;color:#1a1c21;font-weight:700;">64.27%</div>
<div class="t" style="left:735.4px;top:395.96px;font-size:9.29px;line-height:9.29px;color:#343741;">tcp</div>
<div class="t" style="left:750.8px;top:395.74px;font-size:9.73px;line-height:9.73px;color:#1a1c21;font-weight:700;">32.92%</div>
<div class="t" style="left:722.4px;top:427.06px;font-size:9.71px;line-height:9.71px;color:#343741;">unknown</div>
<div class="t" style="left:764.7px;top:427.04px;font-size:9.73px;line-height:9.73px;color:#1a1c21;font-weight:700;">25.23%</div>
<svg class="a" style="left:940px;top:157.9px" width="9" height="9"><circle cx="4.4" cy="4.4" r="2.5" fill="#6cbfa5"/></svg>
<div class="t" style="left:952px;top:158.34px;font-size:8.1px;line-height:8.1px;color:#343741;">Accept</div>
<svg class="a" style="left:1009px;top:157.7px" width="5" height="10"><circle cx="2.5" cy="1.4" r="0.75" fill="#343741"/><circle cx="2.5" cy="4.6" r="0.75" fill="#343741"/><circle cx="2.5" cy="7.8" r="0.75" fill="#343741"/></svg>
<svg class="a" style="left:940px;top:171.6px" width="9" height="9"><circle cx="4.4" cy="4.4" r="2.5" fill="#789fd3"/></svg>
<div class="t" style="left:952px;top:172.04px;font-size:8.1px;line-height:8.1px;color:#343741;">Drop</div>
<svg class="a" style="left:1009px;top:171.4px" width="5" height="10"><circle cx="2.5" cy="1.4" r="0.75" fill="#343741"/><circle cx="2.5" cy="4.6" r="0.75" fill="#343741"/><circle cx="2.5" cy="7.8" r="0.75" fill="#343741"/></svg>
<svg class="a" style="left:940px;top:185.3px" width="9" height="9"><circle cx="4.4" cy="4.4" r="2.5" fill="#dc6e93"/></svg>
<div class="t" style="left:952px;top:185.74px;font-size:8.1px;line-height:8.1px;color:#343741;">Block</div>
<svg class="a" style="left:1009px;top:185.1px" width="5" height="10"><circle cx="2.5" cy="1.4" r="0.75" fill="#343741"/><circle cx="2.5" cy="4.6" r="0.75" fill="#343741"/><circle cx="2.5" cy="7.8" r="0.75" fill="#343741"/></svg>
<svg class="a" style="left:940px;top:199px" width="9" height="9"><circle cx="4.4" cy="4.4" r="2.5" fill="#a286cf"/></svg>
<div class="t" style="left:952px;top:199.44px;font-size:8.1px;line-height:8.1px;color:#343741;">Other</div>
<svg class="a" style="left:1009px;top:198.8px" width="5" height="10"><circle cx="2.5" cy="1.4" r="0.75" fill="#343741"/><circle cx="2.5" cy="4.6" r="0.75" fill="#343741"/><circle cx="2.5" cy="7.8" r="0.75" fill="#343741"/></svg>
<div class="panel" style="left:580.4px;top:482.9px;width:442.2px;height:309.1px;overflow:hidden"></div>
<div class="t" style="left:586px;top:486.7px;font-size:7.78px;line-height:7.78px;color:#1a1c21;font-weight:700;">Traffic Map</div>
<svg class="a" style="left:0;top:0" width="1024" height="798"><defs><clipPath id="mc"><path d="M580.4 497.8 H1022.6 V787 Q1022.6 792 1017.6 792 H585.4 Q580.4 792 580.4 787 Z"/></clipPath><radialGradient id="blob" cx="50%" cy="50%" r="50%"><stop offset="0" stop-color="#7f9a89" stop-opacity=".82"/><stop offset=".28" stop-color="#9bb1a3" stop-opacity=".62"/><stop offset=".6" stop-color="#dfe8e2" stop-opacity=".5"/><stop offset="1" stop-color="#f4f6f4" stop-opacity="0"/></radialGradient><radialGradient id="halo" cx="50%" cy="50%" r="50%"><stop offset="0" stop-color="#dfe9e4" stop-opacity=".7"/><stop offset=".6" stop-color="#f2f5f3" stop-opacity=".5"/><stop offset="1" stop-color="#fff" stop-opacity="0"/></radialGradient><radialGradient id="halo2" cx="50%" cy="50%" r="50%"><stop offset="0" stop-color="#f7f5ef" stop-opacity=".8"/><stop offset="1" stop-color="#fff" stop-opacity="0"/></radialGradient></defs><g clip-path="url(#mc)"><rect x="580.4" y="497.8" width="442.2" height="294.2" fill="#e6e6e6"/><path d="M364.3 612.1 L363.7 609.5 L364.5 606.9 L364.4 604.6 L363.9 603.1 L365.4 602.0 L368.3 602.3 L371.2 602.5 L372.5 602.5 L373.1 600.7 L373.2 598.2 L372.1 596.6 L369.4 595.2 L369.2 594.0 L371.2 593.5 L372.8 593.8 L373.0 592.1 L374.8 592.4 L376.3 591.0 L377.5 589.4 L378.6 588.6 L379.8 587.1 L380.4 585.4 L382.1 584.8 L384.0 584.8 L384.6 582.9 L384.3 580.9 L383.9 578.8 L384.5 577.6 L386.7 576.3 L386.5 578.8 L387.0 579.9 L386.1 581.9 L385.9 582.7 L387.3 583.9 L389.0 583.1 L390.7 584.1 L393.6 582.9 L395.9 582.5 L397.1 583.1 L398.8 581.9 L399.0 579.9 L398.8 577.8 L400.5 576.3 L401.7 577.8 L402.6 576.7 L402.7 575.0 L401.7 574.3 L401.7 572.8 L404.5 572.3 L406.8 572.3 L409.1 571.4 L407.4 570.0 L405.1 570.2 L401.1 571.4 L399.4 569.8 L399.4 567.6 L399.1 565.2 L400.3 562.6 L402.8 559.2 L404.0 557.3 L402.5 556.5 L400.5 556.5 L399.4 558.7 L398.2 561.9 L396.5 563.2 L395.1 565.2 L394.5 568.1 L394.5 569.8 L396.2 571.2 L395.9 573.0 L393.9 574.5 L393.6 577.1 L392.8 579.4 L391.3 579.9 L389.6 581.1 L389.3 579.2 L388.2 576.3 L387.5 573.7 L386.7 572.3 L386.4 573.4 L384.4 575.0 L382.7 575.6 L381.1 573.9 L380.6 572.3 L380.4 568.8 L380.9 565.9 L382.7 564.2 L385.5 562.4 L386.7 560.0 L389.0 557.3 L390.1 553.0 L391.9 549.4 L393.6 547.5 L395.9 544.2 L398.2 543.9 L401.1 541.9 L404.0 539.8 L406.8 540.1 L409.7 542.2 L410.9 544.2 L412.6 545.9 L416.6 546.9 L421.2 550.6 L422.0 553.6 L420.1 555.6 L416.6 555.0 L413.7 553.9 L412.6 555.0 L414.3 558.1 L414.8 560.3 L417.2 561.6 L418.3 560.0 L416.6 558.9 L417.4 557.0 L420.6 559.2 L421.8 557.3 L425.0 555.3 L425.5 550.6 L424.7 548.1 L427.5 549.4 L428.1 551.5 L431.0 550.9 L436.2 548.4 L438.5 548.8 L441.4 547.2 L444.2 547.2 L444.8 544.2 L447.7 545.6 L451.7 547.8 L453.4 549.4 L454.0 547.2 L451.7 544.6 L451.7 538.3 L453.7 533.4 L454.6 532.7 L456.9 533.4 L458.4 536.5 L457.5 540.1 L458.0 545.2 L458.0 548.4 L459.2 550.6 L459.8 551.5 L460.3 546.9 L462.6 538.3 L466.1 535.4 L467.8 530.7 L473.6 529.4 L474.2 526.5 L474.7 523.4 L478.2 521.6 L483.9 519.2 L488.5 517.8 L490.8 515.8 L494.9 511.1 L497.2 514.8 L498.3 517.3 L502.4 516.3 L505.2 520.6 L504.7 529.9 L509.3 530.3 L512.1 532.3 L516.2 532.7 L519.6 530.7 L522.5 533.4 L523.6 538.3 L525.9 540.5 L528.2 538.7 L532.3 538.3 L535.7 534.6 L539.2 533.8 L543.8 535.4 L547.2 538.3 L550.7 540.5 L555.3 540.1 L558.7 543.6 L561.0 544.9 L564.5 544.9 L567.9 544.2 L570.8 543.2 L573.7 543.9 L577.2 544.2 L580.0 545.9 L581.8 547.2 L584.6 549.1 L588.1 552.4 L591.0 554.5 L593.6 556.2 L591.5 557.8 L589.8 560.3 L586.4 559.2 L583.5 557.6 L582.9 560.0 L584.6 563.9 L581.8 565.7 L578.3 565.2 L574.9 567.4 L571.4 570.0 L569.7 570.0 L565.6 571.2 L563.9 571.6 L562.8 573.4 L561.6 576.1 L562.4 578.8 L560.8 581.9 L558.7 584.8 L557.0 586.0 L554.9 589.5 L554.1 585.8 L553.9 580.9 L555.1 576.7 L557.0 575.6 L558.7 572.3 L560.5 570.5 L558.7 568.1 L555.3 567.4 L551.8 572.3 L548.4 573.2 L544.9 572.8 L541.5 572.8 L538.6 573.0 L536.3 575.2 L533.4 578.8 L531.1 582.9 L532.3 584.3 L535.1 583.9 L537.3 586.8 L536.3 590.5 L536.1 594.0 L534.0 596.9 L532.3 599.4 L530.0 602.3 L527.7 603.4 L525.9 603.4 L524.8 604.2 L524.0 606.2 L522.5 607.7 L521.3 608.4 L522.5 610.4 L523.6 612.4 L523.6 614.4 L522.5 615.0 L520.2 615.8 L520.0 614.2 L520.5 612.4 L519.8 611.1 L518.8 610.9 L518.5 609.2 L517.7 607.8 L515.6 607.1 L513.9 606.5 L515.2 608.4 L514.1 609.5 L512.7 607.4 L511.0 608.9 L510.1 609.9 L511.3 611.4 L512.1 611.8 L513.6 610.9 L515.6 611.7 L513.9 613.1 L512.1 615.0 L513.3 617.0 L514.4 618.7 L514.9 620.6 L514.4 621.4 L515.0 622.4 L513.9 624.4 L512.5 626.4 L511.0 628.9 L509.3 630.2 L507.5 631.0 L505.8 631.7 L504.1 632.3 L501.8 633.0 L501.2 634.1 L500.6 632.7 L499.5 632.5 L497.7 633.5 L497.2 634.7 L496.3 636.3 L497.2 637.5 L498.3 639.0 L499.8 640.3 L500.4 642.3 L500.3 644.6 L498.9 645.5 L497.5 646.1 L495.4 648.1 L495.2 646.2 L493.7 645.7 L492.6 644.1 L490.8 643.3 L490.6 642.3 L489.7 642.6 L489.6 644.1 L488.8 645.8 L489.1 647.6 L490.2 649.6 L491.4 650.2 L492.6 651.3 L493.6 652.8 L493.7 654.8 L494.5 656.4 L493.7 656.5 L492.0 655.4 L490.8 654.5 L490.0 652.8 L489.9 650.7 L488.5 649.0 L487.7 648.2 L488.0 646.4 L488.0 644.1 L487.4 641.1 L486.9 638.7 L485.7 638.5 L484.3 639.6 L483.1 639.3 L483.4 636.9 L482.2 635.1 L480.8 633.3 L480.3 631.4 L478.8 631.0 L477.0 632.3 L474.7 632.8 L474.2 634.3 L472.4 635.4 L471.3 636.7 L469.3 638.1 L467.8 639.6 L466.9 640.5 L466.9 642.9 L466.4 645.3 L465.9 646.1 L464.6 647.7 L463.8 648.6 L462.6 647.6 L461.8 644.9 L460.7 642.9 L459.8 639.9 L459.0 637.5 L458.4 635.4 L458.3 633.3 L458.0 631.7 L455.7 633.5 L454.0 631.7 L455.2 630.9 L453.8 630.2 L452.3 629.5 L451.3 627.8 L448.8 628.0 L445.5 628.0 L443.1 627.8 L440.6 627.3 L439.5 625.6 L437.7 626.2 L436.2 626.0 L434.5 624.7 L433.1 623.2 L432.4 621.5 L430.9 621.4 L429.9 621.9 L430.4 623.8 L431.6 625.4 L432.4 626.7 L433.1 628.3 L433.9 627.0 L434.0 628.9 L435.0 629.3 L436.8 629.3 L438.5 627.6 L439.4 626.6 L439.5 628.5 L440.8 629.8 L442.0 630.0 L443.4 631.5 L442.0 633.9 L441.0 635.7 L439.6 636.9 L438.3 637.8 L435.0 638.7 L432.2 640.3 L429.9 641.7 L427.0 642.7 L424.7 643.3 L424.1 641.7 L423.8 639.3 L422.9 637.5 L421.2 635.1 L419.7 632.7 L419.3 631.4 L417.8 628.9 L416.6 627.0 L415.1 624.4 L414.7 622.4 L414.0 624.7 L412.9 623.8 L412.1 621.8 L411.8 620.2 L414.0 620.0 L414.7 618.4 L415.5 616.3 L415.9 614.2 L416.3 612.7 L414.9 612.5 L413.7 613.3 L412.0 613.4 L409.7 613.0 L408.0 612.7 L406.3 612.1 L405.9 610.7 L405.1 609.9 L405.5 608.4 L404.8 607.5 L406.3 607.1 L408.2 605.9 L410.3 606.0 L412.9 604.6 L415.1 604.6 L417.1 605.7 L418.9 606.3 L420.6 606.2 L422.4 605.4 L422.6 603.9 L421.0 602.8 L418.3 600.7 L416.7 599.2 L416.6 599.4 L414.9 600.2 L413.2 600.9 L412.0 599.2 L413.5 598.2 L415.1 597.7 L417.2 596.9 L418.9 596.4 L411.2 597.2 L409.9 597.4 L409.1 599.1 L408.7 599.9 L407.6 601.0 L406.8 602.6 L406.7 604.5 L406.8 605.3 L407.9 605.9 L405.3 606.9 L404.5 606.5 L403.4 606.3 L402.0 606.8 L400.9 606.9 L401.4 607.8 L401.0 608.7 L401.7 609.9 L402.2 610.7 L401.1 611.4 L400.6 612.8 L399.6 612.3 L399.1 611.1 L398.8 610.2 L398.2 608.7 L397.1 606.9 L396.9 604.8 L395.9 603.9 L394.8 603.1 L393.0 602.3 L391.9 600.7 L391.3 599.6 L390.4 600.0 L390.5 598.7 L388.9 599.1 L388.8 600.5 L390.1 602.1 L391.3 604.3 L393.0 604.8 L394.8 606.3 L395.9 607.5 L394.4 607.1 L394.3 609.2 L393.1 610.7 L392.7 610.2 L392.8 608.3 L391.9 607.2 L390.7 606.5 L389.0 605.4 L387.8 604.0 L386.7 603.2 L386.4 601.7 L384.7 600.9 L383.2 601.8 L382.1 602.9 L380.4 602.5 L379.2 602.3 L378.2 603.1 L378.3 604.6 L376.9 605.9 L375.5 606.5 L374.4 608.4 L374.8 609.5 L374.0 610.4 L373.5 611.2 L372.1 612.5 L369.4 612.5 L368.2 613.5 L367.2 612.4 L366.1 611.8Z M573.4 700.2 L575.4 703.2 L577.2 704.6 L580.0 704.9 L578.3 707.6 L576.2 710.7 L575.5 708.2 L574.6 707.1 L575.5 704.2Z M167.5 852.4 L167.5 809.4 L190.5 803.8 L202.0 800.2 L213.5 794.0 L225.0 789.9 L236.5 790.8 L248.0 794.0 L259.5 790.8 L271.0 785.3 L282.5 783.3 L288.3 777.7 L296.4 767.6 L302.1 758.7 L305.6 754.1 L303.3 761.5 L302.1 769.1 L304.4 779.5 L307.9 791.7 L322.8 809.4 L334.3 806.5 L343.5 796.3 L353.9 783.3 L363.1 777.7 L374.6 774.1 L386.1 773.5 L397.6 773.1 L409.1 771.8 L420.6 770.8 L432.2 764.5 L437.9 761.5 L443.7 763.6 L455.2 767.6 L460.9 771.8 L466.7 764.5 L478.2 761.8 L489.7 759.5 L501.2 760.7 L512.7 762.4 L524.2 761.0 L535.7 762.4 L547.2 767.6 L558.7 774.1 L570.2 779.5 L581.8 806.5 L581.8 852.4Z M648.5 517.3 L653.7 513.2 L657.1 517.3 L654.3 520.6 L650.2 520.2Z M677.8 522.0 L681.9 523.0 L681.3 526.1 L678.4 525.6Z M673.8 546.9 L677.3 543.9 L679.6 546.2 L676.7 548.8Z M595.6 557.0 L597.9 555.0 L600.5 554.2 L602.7 555.9 L600.6 552.1 L597.6 549.1 L601.3 544.6 L607.1 540.8 L608.7 539.0 L614.0 540.8 L618.6 542.5 L624.3 543.2 L626.6 544.9 L631.2 546.9 L634.1 544.9 L639.3 543.2 L642.7 544.9 L646.2 545.6 L650.8 545.2 L656.6 547.2 L662.3 550.0 L666.9 548.4 L672.7 550.6 L676.1 550.3 L678.4 548.4 L680.7 538.3 L682.5 545.2 L685.3 548.4 L687.6 552.4 L690.5 545.2 L692.2 544.2 L694.5 550.0 L695.1 554.5 L691.7 555.3 L689.9 560.0 L687.6 561.9 L684.8 563.9 L681.9 567.6 L680.1 572.3 L680.5 574.1 L682.5 577.8 L685.3 577.8 L688.8 580.3 L691.1 581.3 L694.0 581.9 L694.3 585.8 L696.3 589.0 L698.0 588.6 L698.2 582.9 L700.5 578.8 L699.7 574.5 L699.1 570.0 L699.4 565.7 L703.7 565.9 L706.6 568.8 L708.9 573.4 L711.8 575.0 L714.1 571.6 L715.2 573.9 L717.8 578.8 L721.0 581.9 L722.7 583.9 L724.7 586.8 L723.3 588.6 L719.9 591.0 L715.2 591.0 L712.4 591.4 L709.5 594.0 L707.8 596.6 L710.1 593.5 L713.5 592.8 L714.7 594.0 L714.1 596.6 L715.2 597.7 L718.7 598.6 L719.9 598.2 L715.8 600.5 L713.2 602.0 L712.4 600.2 L711.2 600.7 L708.3 602.0 L707.7 603.7 L708.3 605.0 L706.6 605.6 L704.1 606.3 L703.7 606.9 L703.2 608.7 L702.0 609.5 L701.4 612.1 L701.9 614.5 L700.3 615.7 L698.0 617.2 L695.9 619.1 L695.3 621.1 L696.3 624.4 L696.8 626.4 L696.3 628.0 L695.5 627.6 L694.5 626.0 L693.6 624.4 L693.4 622.8 L691.7 621.8 L689.4 621.2 L687.1 621.4 L685.9 621.5 L686.5 622.8 L683.6 622.4 L680.7 622.3 L679.0 623.4 L677.0 624.9 L676.7 627.6 L676.6 630.8 L676.4 632.0 L676.9 633.9 L678.4 635.7 L679.8 636.3 L681.9 636.5 L683.6 636.2 L684.6 635.1 L685.0 633.3 L687.6 632.7 L688.9 632.7 L688.2 634.5 L687.9 636.3 L687.3 637.5 L687.4 639.3 L689.4 639.6 L692.2 639.6 L693.2 640.7 L692.7 643.5 L692.5 645.3 L694.0 647.0 L695.7 647.8 L697.4 647.0 L699.4 647.8 L699.9 648.5 L699.3 649.7 L698.6 648.8 L696.8 649.3 L695.1 648.8 L693.4 648.4 L692.2 647.0 L690.3 646.5 L690.2 645.3 L688.2 643.0 L685.9 642.3 L683.6 641.7 L681.9 639.9 L680.1 639.1 L677.8 639.7 L675.5 639.0 L672.1 637.5 L669.8 636.6 L667.5 634.5 L667.7 632.7 L667.3 631.2 L665.2 628.9 L663.1 627.5 L661.7 625.1 L659.8 623.1 L658.7 620.7 L656.8 619.5 L657.5 621.8 L659.1 623.8 L660.6 626.4 L662.0 629.3 L663.0 630.5 L662.0 630.2 L659.9 628.5 L659.7 626.7 L657.4 624.9 L657.5 623.5 L655.6 621.4 L654.6 619.8 L654.1 618.4 L652.6 616.6 L650.1 615.5 L648.6 612.8 L647.9 610.9 L646.4 608.4 L645.7 607.1 L646.0 604.6 L645.6 602.3 L646.3 597.9 L645.4 594.2 L647.4 593.5 L646.8 592.2 L645.0 591.4 L642.2 589.9 L641.8 587.3 L639.9 584.8 L638.7 582.7 L637.6 580.9 L635.8 577.8 L633.5 575.0 L631.2 573.7 L628.0 571.8 L624.9 571.2 L621.5 570.0 L618.6 570.0 L616.9 571.8 L614.6 573.0 L614.2 570.0 L612.3 572.3 L611.7 575.0 L608.8 577.8 L606.5 579.9 L603.6 580.9 L600.7 582.5 L599.2 583.1 L602.5 580.3 L605.3 577.8 L607.6 574.5 L606.5 573.7 L602.7 573.4 L601.9 571.2 L599.0 569.8 L598.7 566.9 L599.6 563.9 L603.6 562.6 L603.9 560.0 L601.3 560.0 L598.4 560.0 L597.3 558.1Z M685.9 533.1 L690.5 529.4 L696.3 529.9 L701.4 533.4 L706.0 538.3 L710.1 542.5 L711.8 546.2 L712.4 550.0 L716.4 553.0 L718.1 555.0 L716.4 557.8 L714.1 560.5 L713.5 563.9 L710.6 565.2 L706.6 563.9 L703.7 560.5 L699.7 560.0 L699.1 557.3 L703.7 554.5 L704.9 550.0 L702.0 546.2 L698.0 543.6 L692.2 543.6 L687.6 541.9 L685.9 538.3Z M688.8 560.0 L691.7 557.3 L695.1 560.0 L696.3 561.9 L693.4 565.2 L689.9 562.6Z M652.0 538.3 L653.7 533.4 L657.1 531.5 L661.7 530.7 L667.5 532.7 L669.2 537.2 L671.5 540.8 L672.9 544.2 L670.9 547.5 L666.3 547.2 L661.7 546.5 L657.7 545.9 L654.3 544.2 L652.2 541.5Z M644.1 536.5 L645.6 529.4 L648.5 526.5 L653.7 527.3 L656.6 530.7 L653.7 535.4 L650.8 539.0 L647.1 539.8Z M653.7 519.7 L657.1 515.8 L663.5 515.8 L667.5 520.6 L666.9 524.3 L661.7 526.9 L656.0 526.5Z M669.2 531.9 L672.7 529.0 L676.7 529.0 L678.1 533.8 L676.7 538.0 L673.8 535.7 L670.4 534.6Z M679.0 530.7 L680.7 528.6 L684.2 528.6 L685.0 532.7 L682.5 536.5 L680.1 535.4Z M678.4 520.6 L683.0 516.3 L691.1 517.3 L696.8 518.7 L696.3 526.1 L689.9 526.5 L683.6 526.1Z M685.3 517.3 L692.2 518.3 L698.0 515.8 L702.0 509.5 L705.5 503.7 L710.6 494.0 L717.6 482.6 L702.6 473.7 L685.3 482.6 L683.0 494.0 L687.1 500.6 L688.2 506.6 L687.1 512.2Z M677.3 504.9 L678.4 494.0 L684.8 490.4 L689.4 498.7 L687.6 507.8 L683.0 508.3Z M669.2 518.7 L673.8 515.8 L677.3 518.7 L676.7 524.3 L672.7 523.4Z M720.7 595.5 L724.5 592.2 L725.0 588.6 L727.3 592.6 L728.3 595.7 L727.3 597.2 L724.5 595.7Z M704.9 506.6 L710.6 494.0 L719.9 482.6 L737.1 475.6 L754.4 468.9 L765.9 478.3 L775.1 486.6 L768.2 497.4 L767.0 509.5 L767.6 517.3 L764.7 524.3 L763.6 532.7 L761.3 538.3 L763.0 542.9 L760.1 545.9 L753.2 549.4 L748.6 554.7 L744.6 557.3 L742.3 560.5 L740.6 565.2 L739.4 569.3 L738.0 571.4 L736.5 570.0 L733.1 567.6 L731.4 563.9 L729.6 560.0 L728.5 555.9 L727.3 551.5 L727.9 546.9 L730.2 543.6 L727.9 539.4 L725.0 534.6 L723.3 526.5 L721.0 519.7 L714.1 518.3 L710.1 515.8 L706.6 512.2Z M761.3 557.3 L763.6 554.7 L767.6 555.3 L771.1 554.5 L772.2 555.9 L773.2 558.4 L771.6 560.5 L768.2 562.9 L764.7 561.9 L762.8 561.3 L763.6 559.2Z M691.2 632.2 L692.2 630.9 L694.5 630.5 L696.8 630.8 L699.7 632.3 L702.0 633.3 L703.5 634.3 L700.3 634.6 L699.5 633.6 L697.4 632.7 L695.1 631.9 L692.8 632.2Z M703.3 636.3 L705.1 634.6 L708.3 634.9 L710.2 636.2 L708.3 636.7 L706.6 637.4Z M711.6 636.3 L713.4 636.6 L713.2 636.9 L711.6 636.9Z M698.8 636.5 L701.2 636.7 L700.5 637.2 L698.9 636.7Z M699.9 648.5 L700.9 647.6 L702.0 645.8 L703.5 645.0 L705.5 644.3 L706.6 643.6 L708.3 644.1 L708.6 644.7 L710.4 645.8 L712.9 645.7 L715.2 645.7 L717.6 645.6 L718.7 646.4 L719.3 648.2 L720.4 648.8 L722.2 650.2 L723.3 651.1 L725.6 651.1 L727.9 651.7 L729.6 652.8 L730.2 653.6 L731.4 655.9 L731.4 657.4 L733.1 658.6 L734.2 658.9 L737.1 659.7 L738.3 660.9 L740.6 661.2 L742.9 661.3 L745.2 662.4 L747.5 663.8 L748.4 664.5 L748.7 666.7 L748.3 669.0 L746.3 671.3 L744.6 673.1 L744.0 675.5 L743.8 678.5 L743.1 680.9 L741.9 683.3 L740.6 685.2 L737.7 685.5 L735.4 686.5 L733.7 688.4 L732.9 691.6 L731.6 693.6 L730.2 696.2 L728.5 698.3 L727.3 699.9 L725.7 700.9 L723.9 700.8 L721.7 699.7 L723.1 702.2 L723.4 703.2 L722.6 705.6 L720.4 706.5 L717.3 706.5 L717.2 709.1 L714.1 709.8 L714.8 712.1 L714.1 714.2 L713.5 716.1 L711.2 718.1 L712.9 720.3 L711.2 722.9 L710.3 725.0 L709.5 727.4 L710.2 729.1 L708.3 730.2 L711.5 733.1 L713.9 733.5 L711.5 734.5 L709.5 735.1 L707.2 733.1 L704.3 730.2 L702.9 728.3 L702.0 724.6 L702.0 720.3 L702.9 717.8 L703.7 714.5 L704.3 712.1 L704.0 709.1 L704.3 705.3 L705.1 701.8 L706.4 698.3 L706.6 694.2 L706.8 690.3 L707.8 686.5 L708.1 682.7 L708.0 679.7 L706.6 678.5 L704.3 677.3 L702.0 675.5 L701.1 674.0 L699.9 671.9 L698.8 669.6 L697.4 667.0 L695.5 664.9 L695.3 663.2 L696.5 661.9 L695.8 660.5 L696.3 658.6 L696.8 657.1 L698.2 655.9 L699.6 654.0 L699.9 651.7 L699.7 649.9 L699.3 649.7Z M782.1 613.8 L783.1 614.7 L786.4 614.8 L787.7 614.1 L790.1 612.8 L792.9 612.4 L796.4 612.1 L798.7 612.3 L800.4 611.7 L801.6 612.1 L801.0 613.5 L801.6 614.7 L800.8 615.9 L801.3 616.9 L802.1 617.5 L803.9 617.9 L806.4 618.7 L807.0 619.8 L810.2 621.2 L811.9 620.6 L811.9 619.1 L813.6 618.0 L815.4 618.3 L817.7 619.5 L821.7 620.4 L823.4 619.9 L825.7 620.2 L826.3 621.8 L827.5 624.4 L828.0 626.0 L829.8 629.5 L830.3 632.0 L831.7 633.3 L831.9 636.3 L833.2 637.2 L834.4 639.9 L836.1 641.5 L837.8 642.9 L838.7 644.1 L839.5 645.8 L841.8 645.6 L844.1 645.0 L846.4 644.7 L847.8 644.3 L847.6 645.8 L847.0 647.6 L845.9 650.5 L844.1 652.8 L842.4 655.1 L839.5 656.8 L837.2 659.2 L836.1 660.3 L834.9 661.5 L834.1 663.5 L833.8 665.5 L834.4 667.2 L834.9 669.6 L835.5 671.9 L835.6 674.9 L834.4 677.3 L832.1 678.8 L829.8 680.9 L829.2 683.3 L829.8 685.8 L826.9 688.4 L826.6 690.3 L826.3 692.2 L824.6 694.2 L823.4 695.8 L821.7 697.6 L819.4 699.4 L817.7 699.7 L815.4 699.7 L811.9 700.8 L810.2 699.9 L810.0 698.3 L809.4 696.2 L807.9 692.4 L806.7 690.3 L805.9 687.7 L805.6 684.6 L804.4 682.1 L802.7 679.1 L802.5 677.3 L803.3 673.7 L804.7 670.7 L804.1 668.4 L803.1 665.5 L802.7 663.8 L801.6 662.4 L799.8 660.3 L799.6 658.0 L799.8 655.7 L800.2 654.0 L798.7 652.8 L797.0 652.9 L795.2 652.5 L794.1 650.7 L791.8 650.7 L790.1 651.2 L787.7 652.2 L786.0 652.4 L783.7 652.0 L780.3 652.9 L778.5 652.5 L776.2 650.5 L774.5 649.3 L773.7 648.2 L773.0 647.0 L771.6 645.5 L769.9 644.1 L769.6 642.6 L768.8 640.9 L769.9 639.3 L770.3 636.9 L770.1 635.1 L769.3 633.3 L769.9 631.4 L771.1 629.5 L772.2 627.6 L773.9 625.1 L776.2 624.0 L777.6 622.4 L777.6 620.4 L779.1 617.7 L781.1 616.3Z M845.6 671.9 L846.8 675.5 L846.2 677.3 L845.7 679.1 L844.7 682.1 L843.7 685.8 L843.1 687.6 L841.3 688.4 L839.5 687.7 L839.0 684.6 L839.3 682.7 L840.0 680.9 L839.5 678.5 L840.1 676.9 L842.4 676.1 L843.9 674.3 L844.7 673.4Z M778.5 612.1 L778.0 609.5 L778.8 606.9 L778.7 604.6 L778.2 603.1 L779.7 602.0 L782.6 602.3 L785.4 602.5 L786.8 602.5 L787.4 600.7 L787.5 598.2 L786.4 596.6 L783.7 595.2 L783.5 594.0 L785.4 593.5 L787.1 593.8 L787.3 592.1 L789.1 592.4 L790.6 591.0 L791.8 589.4 L792.9 588.6 L794.1 587.1 L794.7 585.4 L796.4 584.8 L798.3 584.8 L798.9 582.9 L798.6 580.9 L798.2 578.8 L798.8 577.6 L801.0 576.3 L800.8 578.8 L801.3 579.9 L800.4 581.9 L800.2 582.7 L801.6 583.9 L803.3 583.1 L805.0 584.1 L807.9 582.9 L810.2 582.5 L811.3 583.1 L813.1 581.9 L813.3 579.9 L813.1 577.8 L814.8 576.3 L815.9 577.8 L816.9 576.7 L817.0 575.0 L815.9 574.3 L815.9 572.8 L818.8 572.3 L821.1 572.3 L823.4 571.4 L821.7 570.0 L819.4 570.2 L815.4 571.4 L813.6 569.8 L813.6 567.6 L813.4 565.2 L814.6 562.6 L817.1 559.2 L818.2 557.3 L816.7 556.5 L814.8 556.5 L813.6 558.7 L812.5 561.9 L810.8 563.2 L809.4 565.2 L808.8 568.1 L808.8 569.8 L810.5 571.2 L810.2 573.0 L808.2 574.5 L807.9 577.1 L807.1 579.4 L805.6 579.9 L803.9 581.1 L803.6 579.2 L802.5 576.3 L801.8 573.7 L801.0 572.3 L800.6 573.4 L798.7 575.0 L797.0 575.6 L795.3 573.9 L794.9 572.3 L794.7 568.8 L795.2 565.9 L797.0 564.2 L799.8 562.4 L801.0 560.0 L803.3 557.3 L804.4 553.0 L806.2 549.4 L807.9 547.5 L810.2 544.2 L812.5 543.9 L815.4 541.9 L818.2 539.8 L821.1 540.1 L824.0 542.2 L825.2 544.2 L826.9 545.9 L830.9 546.9 L835.5 550.6 L836.3 553.6 L834.4 555.6 L830.9 555.0 L828.0 553.9 L826.9 555.0 L828.6 558.1 L829.1 560.3 L831.5 561.6 L832.6 560.0 L830.9 558.9 L831.7 557.0 L834.9 559.2 L836.1 557.3 L839.3 555.3 L839.8 550.6 L839.0 548.1 L841.8 549.4 L842.4 551.5 L845.3 550.9 L850.5 548.4 L852.8 548.8 L855.6 547.2 L858.5 547.2 L859.1 544.2 L862.0 545.6 L866.0 547.8 L867.7 549.4 L868.3 547.2 L866.0 544.6 L866.0 538.3 L868.0 533.4 L868.9 532.7 L871.2 533.4 L872.7 536.5 L871.8 540.1 L872.3 545.2 L872.3 548.4 L873.5 550.6 L874.1 551.5 L874.6 546.9 L876.9 538.3 L880.4 535.4 L882.1 530.7 L887.9 529.4 L888.4 526.5 L889.0 523.4 L892.5 521.6 L898.2 519.2 L902.8 517.8 L905.1 515.8 L909.2 511.1 L911.5 514.8 L912.6 517.3 L916.6 516.3 L919.5 520.6 L918.9 529.9 L923.5 530.3 L926.4 532.3 L930.4 532.7 L933.9 530.7 L936.8 533.4 L937.9 538.3 L940.2 540.5 L942.5 538.7 L946.6 538.3 L950.0 534.6 L953.5 533.8 L958.1 535.4 L961.5 538.3 L965.0 540.5 L969.6 540.1 L973.0 543.6 L975.3 544.9 L978.8 544.9 L982.2 544.2 L985.1 543.2 L988.0 543.9 L991.4 544.2 L994.3 545.9 L996.0 547.2 L998.9 549.1 L1002.4 552.4 L1005.3 554.5 L1007.9 556.2 L1005.8 557.8 L1004.1 560.3 L1000.6 559.2 L997.8 557.6 L997.2 560.0 L998.9 563.9 L996.0 565.7 L992.6 565.2 L989.1 567.4 L985.7 570.0 L984.0 570.0 L979.9 571.2 L978.2 571.6 L977.1 573.4 L975.9 576.1 L976.7 578.8 L975.1 581.9 L973.0 584.8 L971.3 586.0 L969.2 589.5 L968.4 585.8 L968.2 580.9 L969.3 576.7 L971.3 575.6 L973.0 572.3 L974.8 570.5 L973.0 568.1 L969.6 567.4 L966.1 572.3 L962.7 573.2 L959.2 572.8 L955.8 572.8 L952.9 573.0 L950.6 575.2 L947.7 578.8 L945.4 582.9 L946.6 584.3 L949.4 583.9 L951.6 586.8 L950.6 590.5 L950.4 594.0 L948.3 596.9 L946.6 599.4 L944.3 602.3 L942.0 603.4 L940.2 603.4 L939.1 604.2 L938.3 606.2 L936.8 607.7 L935.6 608.4 L936.8 610.4 L937.9 612.4 L937.9 614.4 L936.8 615.0 L934.5 615.8 L934.2 614.2 L934.8 612.4 L934.1 611.1 L933.1 610.9 L932.8 609.2 L931.9 607.8 L929.9 607.1 L928.1 606.5 L929.5 608.4 L928.4 609.5 L927.0 607.4 L925.3 608.9 L924.3 609.9 L925.6 611.4 L926.4 611.8 L927.9 610.9 L929.9 611.7 L928.1 613.1 L926.4 615.0 L927.6 617.0 L928.7 618.7 L929.2 620.6 L928.7 621.4 L929.3 622.4 L928.1 624.4 L926.8 626.4 L925.3 628.9 L923.5 630.2 L921.8 631.0 L920.1 631.7 L918.4 632.3 L916.1 633.0 L915.5 634.1 L914.9 632.7 L913.8 632.5 L912.0 633.5 L911.5 634.7 L910.5 636.3 L911.5 637.5 L912.6 639.0 L914.1 640.3 L914.7 642.3 L914.6 644.6 L913.2 645.5 L911.8 646.1 L909.7 648.1 L909.5 646.2 L908.0 645.7 L906.9 644.1 L905.1 643.3 L904.9 642.3 L904.0 642.6 L903.9 644.1 L903.1 645.8 L903.4 647.6 L904.4 649.6 L905.7 650.2 L906.9 651.3 L907.9 652.8 L908.0 654.8 L908.8 656.4 L908.0 656.5 L906.3 655.4 L905.1 654.5 L904.3 652.8 L904.2 650.7 L902.8 649.0 L902.0 648.2 L902.3 646.4 L902.3 644.1 L901.7 641.1 L901.2 638.7 L900.0 638.5 L898.6 639.6 L897.4 639.3 L897.7 636.9 L896.5 635.1 L895.1 633.3 L894.5 631.4 L893.0 631.0 L891.3 632.3 L889.0 632.8 L888.4 634.3 L886.7 635.4 L885.6 636.7 L883.6 638.1 L882.1 639.6 L881.2 640.5 L881.2 642.9 L880.7 645.3 L880.2 646.1 L878.9 647.7 L878.1 648.6 L876.9 647.6 L876.1 644.9 L875.0 642.9 L874.1 639.9 L873.3 637.5 L872.7 635.4 L872.6 633.3 L872.3 631.7 L870.0 633.5 L868.3 631.7 L869.5 630.9 L868.1 630.2 L866.6 629.5 L865.5 627.8 L863.1 628.0 L859.8 628.0 L857.4 627.8 L854.8 627.3 L853.8 625.6 L852.0 626.2 L850.5 626.0 L848.7 624.7 L847.4 623.2 L846.7 621.5 L845.2 621.4 L844.1 621.9 L844.7 623.8 L845.9 625.4 L846.7 626.7 L847.4 628.3 L848.2 627.0 L848.3 628.9 L849.3 629.3 L851.0 629.3 L852.8 627.6 L853.7 626.6 L853.8 628.5 L855.1 629.8 L856.3 630.0 L857.7 631.5 L856.3 633.9 L855.3 635.7 L853.9 636.9 L852.5 637.8 L849.3 638.7 L846.4 640.3 L844.1 641.7 L841.3 642.7 L839.0 643.3 L838.4 641.7 L838.0 639.3 L837.2 637.5 L835.5 635.1 L834.0 632.7 L833.6 631.4 L832.1 628.9 L830.9 627.0 L829.4 624.4 L828.9 622.4 L828.3 624.7 L827.2 623.8 L826.4 621.8 L826.1 620.2 L828.3 620.0 L828.9 618.4 L829.8 616.3 L830.2 614.2 L830.6 612.7 L829.2 612.5 L828.0 613.3 L826.3 613.4 L824.0 613.0 L822.3 612.7 L820.5 612.1 L820.2 610.7 L819.4 609.9 L819.7 608.4 L819.1 607.5 L820.5 607.1 L822.5 605.9 L824.6 606.0 L827.2 604.6 L829.4 604.6 L831.4 605.7 L833.2 606.3 L834.9 606.2 L836.7 605.4 L836.9 603.9 L835.3 602.8 L832.6 600.7 L831.0 599.2 L830.9 599.4 L829.2 600.2 L827.5 600.9 L826.3 599.2 L827.8 598.2 L829.4 597.7 L831.5 596.9 L833.2 596.4 L825.5 597.2 L824.2 597.4 L823.4 599.1 L823.0 599.9 L821.9 601.0 L821.1 602.6 L821.0 604.5 L821.1 605.3 L822.2 605.9 L819.6 606.9 L818.8 606.5 L817.7 606.3 L816.3 606.8 L815.1 606.9 L815.7 607.8 L815.3 608.7 L815.9 609.9 L816.5 610.7 L815.4 611.4 L814.9 612.8 L813.9 612.3 L813.4 611.1 L813.1 610.2 L812.5 608.7 L811.3 606.9 L811.2 604.8 L810.2 603.9 L809.0 603.1 L807.3 602.3 L806.2 600.7 L805.6 599.6 L804.7 600.0 L804.8 598.7 L803.2 599.1 L803.1 600.5 L804.4 602.1 L805.6 604.3 L807.3 604.8 L809.0 606.3 L810.2 607.5 L808.7 607.1 L808.6 609.2 L807.4 610.7 L807.0 610.2 L807.1 608.3 L806.2 607.2 L805.0 606.5 L803.3 605.4 L802.1 604.0 L801.0 603.2 L800.6 601.7 L799.0 600.9 L797.5 601.8 L796.4 602.9 L794.7 602.5 L793.5 602.3 L792.5 603.1 L792.6 604.6 L791.2 605.9 L789.8 606.5 L788.7 608.4 L789.1 609.5 L788.3 610.4 L787.7 611.2 L786.4 612.5 L783.7 612.5 L782.5 613.5 L781.5 612.4 L780.4 611.8Z M782.3 591.4 L790.5 589.2 L790.9 586.4 L788.9 584.8 L787.2 581.9 L786.6 579.9 L786.8 576.5 L784.3 576.5 L785.4 574.3 L783.1 574.3 L781.8 576.7 L782.5 579.2 L781.8 580.3 L783.4 582.3 L785.3 583.9 L785.4 585.2 L783.5 586.2 L782.9 588.3 L785.4 589.2Z M777.4 588.3 L782.0 587.7 L782.0 584.3 L782.6 581.5 L779.1 581.5 L777.4 583.5Z M880.8 651.1 L881.7 651.2 L883.0 649.7 L882.3 648.2 L881.2 646.7 L880.6 648.5Z M939.5 616.3 L944.3 617.0 L946.6 615.7 L950.0 615.0 L951.2 610.2 L951.7 605.7 L950.0 606.9 L949.4 610.7 L946.0 611.8 L942.0 614.2Z M950.0 605.4 L953.7 604.6 L956.3 602.6 L952.1 599.2Z M938.3 617.5 L939.9 620.0 L940.7 617.0Z M941.4 617.7 L943.9 616.6 L943.1 615.9 L941.4 616.5Z M927.2 631.4 L928.1 628.3 L929.3 628.3 L928.0 632.2Z M914.0 635.5 L915.8 634.4 L916.6 635.0 L915.5 636.5 L914.0 636.3Z M952.3 598.2 L954.0 593.1 L955.2 593.1 L952.9 583.3 L952.3 589.5Z M927.0 636.3 L929.6 636.5 L929.3 639.3 L931.6 642.9 L927.6 642.0 L927.0 639.3Z M929.3 649.9 L933.9 647.0 L934.5 650.5 L932.8 651.3Z M929.3 644.7 L933.3 643.7 L933.3 646.4 L929.9 647.0Z M914.3 656.3 L916.1 660.9 L920.1 661.9 L923.0 661.5 L924.7 656.8 L925.8 652.2 L923.5 649.9 L921.8 652.2 L918.9 654.3 L916.6 655.9Z M898.6 651.7 L901.1 652.0 L904.6 655.7 L909.2 659.2 L910.9 661.5 L910.7 664.7 L909.2 664.8 L905.7 661.5 L902.5 656.0Z M910.0 665.8 L910.9 664.9 L916.1 666.0 L920.7 666.9 L920.7 668.1 L915.5 667.5 L910.3 666.5Z M926.2 664.3 L927.6 664.3 L928.1 660.9 L930.4 659.2 L932.8 656.5 L927.0 656.8 L925.8 661.5Z M939.7 659.5 L943.1 659.0 L947.1 659.7 L951.2 661.0 L956.3 663.2 L958.6 664.9 L959.2 667.2 L962.1 670.2 L958.1 669.6 L954.6 667.0 L951.2 668.5 L947.7 667.6 L947.1 663.8 L944.3 663.2 L940.8 661.2Z M919.5 684.0 L920.1 689.0 L921.2 694.2 L921.2 699.7 L924.7 701.0 L931.0 699.5 L933.9 697.3 L939.7 696.2 L943.5 698.1 L947.1 701.8 L948.3 700.3 L950.0 704.6 L954.6 706.1 L957.3 706.8 L961.5 704.6 L963.0 699.0 L965.0 695.6 L965.5 691.6 L965.0 687.7 L962.4 684.6 L960.4 682.1 L956.9 680.0 L956.3 675.5 L954.0 674.3 L952.9 670.5 L951.7 673.1 L951.7 677.3 L950.0 678.7 L946.6 676.7 L944.8 675.5 L946.3 672.1 L941.4 671.3 L938.5 673.1 L937.9 675.5 L935.1 674.3 L932.8 675.5 L930.4 677.3 L928.7 680.9 L923.5 682.5Z M955.3 709.4 L959.6 709.7 L959.2 713.2 L956.9 713.9Z M987.6 700.2 L989.7 703.2 L991.4 704.6 L994.3 704.9 L992.6 707.6 L990.5 710.7 L989.8 708.2 L988.9 707.1 L989.8 704.2Z M987.6 709.1 L989.5 710.6 L988.0 714.2 L985.7 716.9 L983.4 718.9 L980.5 717.8 L982.6 714.5 L985.2 712.8Z M848.7 538.3 L853.3 541.5 L855.6 540.8 L852.8 532.7 L854.5 526.5 L860.2 522.0 L868.3 515.3 L863.7 514.8 L855.6 520.6 L851.6 528.6Z M801.6 506.6 L807.3 517.3 L814.2 512.2 L820.0 500.6 L811.9 494.0 L801.6 498.7Z M945.4 522.0 L952.3 529.4 L961.5 524.3 L955.8 519.7Z M899.4 504.9 L908.6 503.7 L905.1 494.0Z M581.8 852.4 L581.8 809.4 L604.8 803.8 L616.3 800.2 L627.8 794.0 L639.3 789.9 L650.8 790.8 L662.3 794.0 L673.8 790.8 L685.3 785.3 L696.8 783.3 L702.6 777.7 L710.6 767.6 L716.4 758.7 L719.9 754.1 L717.6 761.5 L716.4 769.1 L718.7 779.5 L722.2 791.7 L737.1 809.4 L748.6 806.5 L757.8 796.3 L768.2 783.3 L777.4 777.7 L788.9 774.1 L800.4 773.5 L811.9 773.1 L823.4 771.8 L834.9 770.8 L846.4 764.5 L852.2 761.5 L857.9 763.6 L869.5 767.6 L875.2 771.8 L881.0 764.5 L892.5 761.8 L904.0 759.5 L915.5 760.7 L927.0 762.4 L938.5 761.0 L950.0 762.4 L961.5 767.6 L973.0 774.1 L984.5 779.5 L996.0 806.5 L996.0 852.4Z M843.0 599.9 L844.1 597.2 L845.9 597.7 L847.6 596.6 L849.9 597.2 L850.1 599.4 L847.9 600.7 L849.3 603.9 L850.5 606.2 L849.9 607.7 L850.5 609.2 L850.8 611.7 L848.2 612.4 L846.4 611.5 L845.3 611.2 L845.1 609.5 L845.6 607.4 L846.3 606.8 L844.7 605.0 L843.6 603.1 L843.6 600.7Z M1009.9 557.0 L1012.2 555.0 L1014.8 554.2 L1017.0 555.9 L1014.9 552.1 L1011.9 549.1 L1015.6 544.6 L1021.4 540.8 L1023.0 539.0 L1028.3 540.8 L1032.9 542.5 L1038.6 543.2 L1040.9 544.9 L1045.5 546.9 L1048.4 544.9 L1053.6 543.2 L1057.0 544.9 L1060.5 545.6 L1065.1 545.2 L1070.8 547.2 L1076.6 550.0 L1081.2 548.4 L1087.0 550.6 L1090.4 550.3 L1092.7 548.4 L1095.0 538.3 L1096.7 545.2 L1099.6 548.4 L1101.9 552.4 L1104.8 545.2 L1106.5 544.2 L1108.8 550.0 L1109.4 554.5 L1105.9 555.3 L1104.2 560.0 L1101.9 561.9 L1099.0 563.9 L1096.2 567.6 L1094.4 572.3 L1094.8 574.1 L1096.7 577.8 L1099.6 577.8 L1103.1 580.3 L1105.4 581.3 L1108.2 581.9 L1108.6 585.8 L1110.5 589.0 L1112.3 588.6 L1112.5 582.9 L1114.8 578.8 L1114.0 574.5 L1113.4 570.0 L1113.7 565.7 L1118.0 565.9 L1120.9 568.8 L1123.2 573.4 L1126.1 575.0 L1128.4 571.6 L1129.5 573.9 L1132.1 578.8 L1135.3 581.9 L1137.0 583.9 L1139.0 586.8 L1137.6 588.6 L1134.1 591.0 L1129.5 591.0 L1126.7 591.4 L1123.8 594.0 L1122.1 596.6 L1124.4 593.5 L1127.8 592.8 L1129.0 594.0 L1128.4 596.6 L1129.5 597.7 L1133.0 598.6 L1134.1 598.2 L1130.1 600.5 L1127.5 602.0 L1126.7 600.2 L1125.5 600.7 L1122.6 602.0 L1121.9 603.7 L1122.6 605.0 L1120.9 605.6 L1118.4 606.3 L1118.0 606.9 L1117.5 608.7 L1116.3 609.5 L1115.7 612.1 L1116.2 614.5 L1114.6 615.7 L1112.3 617.2 L1110.2 619.1 L1109.6 621.1 L1110.5 624.4 L1111.1 626.4 L1110.5 628.0 L1109.7 627.6 L1108.8 626.0 L1107.9 624.4 L1107.7 622.8 L1105.9 621.8 L1103.6 621.2 L1101.3 621.4 L1100.2 621.5 L1100.8 622.8 L1097.9 622.4 L1095.0 622.3 L1093.3 623.4 L1091.3 624.9 L1091.0 627.6 L1090.9 630.8 L1090.6 632.0 L1091.2 633.9 L1092.7 635.7 L1094.1 636.3 L1096.2 636.5 L1097.9 636.2 L1098.9 635.1 L1099.3 633.3 L1101.9 632.7 L1103.2 632.7 L1102.5 634.5 L1102.1 636.3 L1101.6 637.5 L1101.7 639.3 L1103.6 639.6 L1106.5 639.6 L1107.4 640.7 L1107.0 643.5 L1106.8 645.3 L1108.2 647.0 L1110.0 647.8 L1111.7 647.0 L1113.7 647.8 L1114.2 648.5 L1113.5 649.7 L1112.9 648.8 L1111.1 649.3 L1109.4 648.8 L1107.7 648.4 L1106.5 647.0 L1104.6 646.5 L1104.4 645.3 L1102.5 643.0 L1100.2 642.3 L1097.9 641.7 L1096.2 639.9 L1094.4 639.1 L1092.1 639.7 L1089.8 639.0 L1086.4 637.5 L1084.1 636.6 L1081.8 634.5 L1082.0 632.7 L1081.5 631.2 L1079.5 628.9 L1077.4 627.5 L1076.0 625.1 L1074.1 623.1 L1073.0 620.7 L1071.1 619.5 L1071.8 621.8 L1073.4 623.8 L1074.9 626.4 L1076.3 629.3 L1077.3 630.5 L1076.3 630.2 L1074.2 628.5 L1074.0 626.7 L1071.7 624.9 L1071.8 623.5 L1069.9 621.4 L1068.9 619.8 L1068.4 618.4 L1066.9 616.6 L1064.4 615.5 L1062.9 612.8 L1062.2 610.9 L1060.7 608.4 L1060.0 607.1 L1060.3 604.6 L1059.9 602.3 L1060.6 597.9 L1059.7 594.2 L1061.6 593.5 L1061.1 592.2 L1059.3 591.4 L1056.5 589.9 L1056.1 587.3 L1054.2 584.8 L1053.0 582.7 L1051.9 580.9 L1050.1 577.8 L1047.8 575.0 L1045.5 573.7 L1042.3 571.8 L1039.2 571.2 L1035.7 570.0 L1032.9 570.0 L1031.1 571.8 L1028.8 573.0 L1028.5 570.0 L1026.5 572.3 L1026.0 575.0 L1023.1 577.8 L1020.8 579.9 L1017.9 580.9 L1015.0 582.5 L1013.5 583.1 L1016.8 580.3 L1019.6 577.8 L1021.9 574.5 L1020.8 573.7 L1017.0 573.4 L1016.2 571.2 L1013.3 569.8 L1013.0 566.9 L1013.9 563.9 L1017.9 562.6 L1018.1 560.0 L1015.6 560.0 L1012.7 560.0 L1011.6 558.1Z M996.0 852.4 L996.0 809.4 L1019.1 803.8 L1030.6 800.2 L1042.1 794.0 L1053.6 789.9 L1065.1 790.8 L1076.6 794.0 L1088.1 790.8 L1099.6 785.3 L1111.1 783.3 L1116.9 777.7 L1124.9 767.6 L1130.7 758.7 L1134.1 754.1 L1131.8 761.5 L1130.7 769.1 L1133.0 779.5 L1136.4 791.7 L1151.4 809.4 L1162.9 806.5 L1172.1 796.3 L1182.5 783.3 L1191.7 777.7 L1203.2 774.1 L1214.7 773.5 L1226.2 773.1 L1237.7 771.8 L1249.2 770.8 L1260.7 764.5 L1266.5 761.5 L1272.2 763.6 L1283.7 767.6 L1289.5 771.8 L1295.3 764.5 L1306.8 761.8 L1318.3 759.5 L1329.8 760.7 L1341.3 762.4 L1352.8 761.0 L1364.3 762.4 L1375.8 767.6 L1387.3 774.1 L1398.8 779.5 L1410.3 806.5 L1410.3 852.4Z" fill="#ffffff" fill-rule="evenodd" stroke="#c9cdd2" stroke-width="0.6" stroke-linejoin="round"/><path d="M626.6 544.9 L626.6 570.5 L628.9 571.2 L630.7 573.4 L633.0 571.8 L635.3 574.8 L638.1 579.9 L639.3 581.3 M647.1 593.1 L679.3 593.1 L679.3 592.4 L685.9 594.9 L691.7 597.4 L694.0 599.4 L694.0 603.9 L698.0 602.6 L700.9 601.2 L702.9 599.9 L706.6 599.9 L708.3 597.4 L709.3 595.9 L710.9 596.4 L710.9 599.1 L711.8 600.2 M654.1 618.4 L656.9 618.1 L661.2 620.0 L664.4 620.0 L666.3 619.4 L668.6 622.3 L670.4 623.1 L672.2 622.0 L674.4 625.1 L677.0 627.1 M682.8 641.1 L683.0 637.2 L686.4 637.2 L687.3 636.3 M686.2 639.5 L686.2 641.7 M688.2 642.9 L690.5 641.1 L693.2 640.5 M690.3 645.1 L692.6 645.4 M693.5 648.6 L693.8 646.9 M706.3 644.3 L705.5 648.8 L711.2 650.9 L711.2 655.7 L708.3 656.8 M719.9 648.2 L719.0 652.0 L715.2 653.4 L715.2 656.3 M723.3 651.1 L722.2 656.3 M726.8 651.4 L726.2 655.4 M729.6 653.0 L726.2 655.4 L722.2 656.3 L715.2 656.3 L711.8 655.7 L708.9 656.8 L708.3 662.6 L704.9 663.2 L704.9 666.7 L705.5 669.6 L708.9 670.7 L714.1 670.2 L717.6 673.1 L719.9 673.7 L719.9 676.7 L722.2 677.3 L722.2 681.5 L725.0 684.6 L726.2 688.4 L727.0 690.3 L722.7 694.2 L727.4 699.2 M698.0 656.3 L702.6 658.0 L702.6 659.2 L698.6 661.5 L696.5 661.9 M708.3 662.6 L708.3 659.2 L702.6 658.0 M708.9 670.7 L709.5 675.5 L708.9 678.5 L708.0 679.4 M708.9 678.5 L710.1 682.7 L711.8 685.2 L710.1 686.5 L710.1 690.3 L708.3 694.2 L708.3 699.7 L707.2 705.3 L706.6 711.4 L706.3 717.8 L704.9 723.8 L706.0 727.4 L710.1 728.9 M717.0 684.0 L722.2 681.5 M717.0 684.0 L711.8 685.2 M717.0 684.0 L719.9 686.5 L722.7 688.4 L726.2 688.4 M722.6 694.5 L721.8 698.3 M786.6 615.0 L787.2 619.1 L783.1 622.4 L778.9 624.8 L773.7 624.8 M778.9 624.8 L778.9 627.0 L775.1 627.0 L775.1 630.2 L773.9 632.9 L769.3 632.9 M798.7 612.1 L798.1 616.3 L799.8 619.1 L800.4 621.5 L800.4 628.3 L802.7 630.2 M817.7 619.5 L817.7 632.0 L831.4 632.0 M783.4 628.3 L790.1 633.3 L793.7 635.5 L802.7 630.2 L805.0 631.0 L806.2 630.8 L816.5 635.1 L816.5 639.7 M816.5 635.1 L814.8 641.7 L814.2 643.5 L815.9 646.4 M775.1 630.2 L782.0 628.9 L782.6 638.7 L775.7 639.9 L774.9 640.9 M793.0 644.4 L797.0 642.6 L803.3 642.8 L805.0 643.5 M793.7 635.5 L793.5 638.7 L790.1 640.5 L782.6 645.8 L779.7 648.8 L776.2 650.0 M790.1 640.5 L789.5 645.3 L790.6 650.9 M782.6 645.8 L785.4 652.1 M798.7 652.8 L802.1 649.9 L804.4 646.4 L805.6 643.5 M805.6 643.5 L806.7 649.3 L814.2 652.2 L820.5 652.2 M806.7 654.5 L810.8 652.8 L816.5 652.2 L820.5 652.2 M799.8 655.7 L801.9 655.5 L805.6 655.5 L807.3 656.3 L809.0 662.6 L803.3 663.8 M815.9 646.4 L820.0 647.0 L826.9 644.7 L828.0 647.0 M820.5 652.2 L824.6 653.7 L828.0 652.8 L830.3 652.8 L836.7 653.6 M836.7 653.6 L840.7 652.2 L844.1 648.8 L838.4 645.3 M830.9 641.4 L837.8 642.9 M828.0 647.0 L829.2 643.5 L830.9 641.4 M828.0 659.2 L834.0 663.4 M828.0 652.8 L828.0 659.2 M823.4 654.0 L822.8 659.2 L822.3 663.2 L824.0 667.8 L826.9 669.0 L828.6 671.3 L829.2 676.7 M802.7 663.8 L807.3 664.9 L809.6 667.2 L814.0 666.7 L814.2 671.3 L816.5 670.7 L816.5 673.1 L814.2 673.1 L814.2 676.7 L815.4 678.8 L817.7 678.5 L821.1 676.7 L824.0 676.1 L826.3 673.1 M802.5 678.2 L812.5 678.5 L815.4 678.8 M811.9 684.0 L811.9 687.5 L811.9 692.2 L807.9 692.4 M811.9 687.5 L817.7 688.4 L820.0 685.2 L822.8 684.0 L824.9 684.3 L825.7 689.6 M824.9 684.3 L826.9 680.3 L826.3 676.7 L824.0 676.1 M779.5 604.6 L781.4 605.4 L780.8 609.2 L780.4 611.8 M786.8 602.5 L792.6 604.0 M791.8 589.4 L794.1 591.4 L796.0 592.2 L798.3 593.1 L797.6 595.5 L796.7 597.7 L797.0 599.9 L797.5 601.8 M796.4 585.0 L797.0 587.7 L795.8 589.9 L796.0 592.2 M798.9 582.1 L800.3 582.3 M805.2 584.1 L805.8 587.7 L806.2 589.5 M806.2 589.5 L802.9 590.8 L804.8 593.8 L803.9 595.7 L801.0 595.7 L797.6 595.5 M796.7 597.7 L798.7 598.2 L801.0 597.4 L803.3 596.6 L804.7 597.4 M806.2 589.5 L808.5 590.8 L810.8 592.2 L814.8 593.1 L816.5 590.5 L815.9 587.7 L815.9 583.9 L815.1 583.1 M804.8 593.8 L808.5 593.7 L810.8 594.9 L814.2 594.2 M804.7 597.4 L807.9 597.4 L810.5 598.4 L814.8 594.9 M804.6 599.1 L806.7 597.7 L808.5 598.6 L810.8 600.0 L814.8 600.7 L821.7 601.8 M811.2 604.8 L812.5 603.9 L815.4 605.4 L818.8 604.6 L821.1 604.6 M812.5 607.7 L815.4 605.4 M814.8 594.9 L819.4 594.5 L821.7 599.1 L823.0 599.4 M815.9 588.6 L824.0 588.6 L829.2 587.3 L834.9 592.2 L833.8 596.6 M813.1 579.7 L819.4 580.7 L821.1 579.4 L820.5 576.7 L821.1 572.5 M815.1 583.1 L819.4 580.7 M813.6 576.7 L816.9 576.1 L820.5 576.7 M821.1 579.4 L825.2 583.9 L824.0 588.6 M802.5 573.7 L803.3 568.8 L805.0 561.3 L807.3 551.5 L811.9 546.9 L814.2 545.2 L822.3 546.5 M816.5 556.5 L815.9 551.5 L813.1 546.9 M820.9 570.0 L824.0 566.4 L823.4 561.3 L822.8 554.5 L821.7 546.9 L823.4 544.2 M843.6 599.1 L845.9 597.7 M845.9 597.7 L843.0 593.1 L849.9 589.5 L859.1 590.5 L868.3 581.9 L876.4 583.9 L881.0 589.9 L889.6 592.8 M889.6 592.8 L894.8 590.5 L901.7 587.7 L910.9 590.8 L920.1 591.4 L924.1 592.2 L927.0 585.8 L935.1 585.8 L943.7 594.9 L939.7 599.9 L939.1 603.9 M889.6 592.8 L893.6 599.1 L899.4 603.9 L909.7 605.4 L917.8 603.9 L926.4 597.4 L924.1 592.2 M849.9 604.6 L853.3 599.9 L856.8 599.1 L859.1 600.7 L867.2 606.2 L870.6 603.4 L881.0 603.4 L881.0 599.9 L884.4 596.2 L889.6 592.8 M850.8 611.7 L854.5 610.7 L859.1 612.8 L863.1 611.4 L866.0 611.7 L871.2 612.1 L874.6 611.4 M874.6 611.4 L878.7 614.2 L879.8 618.4 L882.1 621.5 L885.6 623.8 L890.2 624.7 L894.8 624.7 L900.5 624.4 L901.7 628.3 L901.7 629.5 L905.7 632.7 L906.3 631.4 L911.7 631.0 L913.2 632.5 M874.6 612.1 L875.2 616.3 L874.6 620.4 L870.6 624.4 L870.0 628.3 L868.1 629.8 M874.6 612.1 L871.2 613.5 L869.5 617.7 L864.9 621.8 L859.1 622.0 L860.8 624.4 L859.8 628.0 M839.5 608.4 L840.5 612.1 L841.8 615.0 L844.1 621.8 M830.6 612.7 L832.6 612.4 L837.6 612.0 L840.5 611.8 M833.8 619.1 L837.2 620.4 L843.0 623.1 L844.7 623.8 M833.8 619.1 L836.1 616.3 L837.6 612.0 M829.8 618.4 L833.8 619.1 M838.4 638.4 L843.0 638.1 L848.7 635.7 L852.8 632.0 L853.7 628.5 M836.7 605.4 L842.4 605.0 L844.7 605.0 M902.3 646.4 L902.8 640.5 L902.3 638.1 L901.1 634.5 L904.0 632.7 L905.7 632.7 M906.3 631.4 L908.6 633.9 L911.5 638.1 L912.6 641.1 L910.9 645.3 M906.9 644.1 L907.4 641.1 L910.3 641.1 L909.7 636.9 L905.1 637.5 L904.0 634.3 M890.7 632.0 L891.3 626.6 L894.8 628.3 L895.3 633.3 M931.9 607.8 L934.5 605.4 L937.4 604.2 L939.1 604.2 M934.1 611.1 L937.4 610.2 M951.2 661.0 L951.2 668.5" fill="none" stroke="#d2d5da" stroke-width="0.55" stroke-linejoin="round"/><path d="M685.7 615.4 L817.0 575.7" stroke="#8aa6e0" stroke-opacity="0.40" stroke-width="1"/><path d="M663.1 610.4 L813.1 588.6" stroke="#6b8bd8" stroke-opacity="0.46" stroke-width="1"/><path d="M676.1 617.6 L814.9 571.5" stroke="#8aa6e0" stroke-opacity="0.21" stroke-width="1"/><path d="M670.2 607.0 L812.2 591.1" stroke="#6b8bd8" stroke-opacity="0.18" stroke-width="1"/><path d="M667.3 613.1 L813.6 571.0" stroke="#6b8bd8" stroke-opacity="0.45" stroke-width="1"/><path d="M691.4 619.3 L787.5 578.5" stroke="#6b8bd8" stroke-opacity="0.24" stroke-width="1"/><path d="M682.5 614.2 L814.0 575.7" stroke="#5f7fd0" stroke-opacity="0.38" stroke-width="1"/><path d="M673.4 608.5 L787.5 578.1" stroke="#5f7fd0" stroke-opacity="0.14" stroke-width="1"/><path d="M693.1 612.6 L816.0 574.5" stroke="#5f7fd0" stroke-opacity="0.15" stroke-width="1"/><path d="M693.1 610.7 L792.4 585.1" stroke="#6b8bd8" stroke-opacity="0.39" stroke-width="1"/><path d="M671.7 618.9 L817.7 572.8" stroke="#8aa6e0" stroke-opacity="0.27" stroke-width="1"/><path d="M691.9 608.6 L801.1 575.2" stroke="#6b8bd8" stroke-opacity="0.14" stroke-width="1"/><path d="M685.7 619.2 L813.6 572.2" stroke="#5f7fd0" stroke-opacity="0.43" stroke-width="1"/><path d="M675.1 608.4 L799.3 591.3" stroke="#8aa6e0" stroke-opacity="0.16" stroke-width="1"/><path d="M691.7 608.6 L814.5 573.2" stroke="#6b8bd8" stroke-opacity="0.49" stroke-width="1"/><path d="M674.9 613.0 L812.3 582.1" stroke="#8aa6e0" stroke-opacity="0.47" stroke-width="1"/><path d="M665.5 614.3 L814.5 575.0" stroke="#8aa6e0" stroke-opacity="0.36" stroke-width="1"/><path d="M688.2 619.9 L787.3 576.0" stroke="#8aa6e0" stroke-opacity="0.49" stroke-width="1"/><path d="M697.1 602.6 L816.7 572.7" stroke="#8aa6e0" stroke-opacity="0.22" stroke-width="1"/><path d="M678.0 603.0 L812.2 575.7" stroke="#6b8bd8" stroke-opacity="0.31" stroke-width="1"/><path d="M667.0 615.2 L817.7 574.2" stroke="#6b8bd8" stroke-opacity="0.42" stroke-width="1"/><path d="M668.4 608.7 L783.9 583.8" stroke="#8aa6e0" stroke-opacity="0.17" stroke-width="1"/><path d="M694.4 619.6 L815.3 573.4" stroke="#5f7fd0" stroke-opacity="0.40" stroke-width="1"/><path d="M672.4 610.5 L811.8 577.4" stroke="#8aa6e0" stroke-opacity="0.43" stroke-width="1"/><path d="M698.5 613.3 L815.5 572.7" stroke="#5f7fd0" stroke-opacity="0.15" stroke-width="1"/><path d="M681.6 611.9 L798.6 576.3" stroke="#5f7fd0" stroke-opacity="0.42" stroke-width="1"/><path d="M686.3 616.9 L954.3 703.0" stroke="#8fb4e4" stroke-opacity="0.31" stroke-width="1"/><path d="M692.6 608.6 L956.3 705.5" stroke="#8fb4e4" stroke-opacity="0.39" stroke-width="1"/><path d="M684.2 615.2 L947.6 704.3" stroke="#6f90d8" stroke-opacity="0.18" stroke-width="1"/><path d="M667.3 609.1 L952.0 705.2" stroke="#8fb4e4" stroke-opacity="0.21" stroke-width="1"/><path d="M684.0 618.5 L955.0 703.0" stroke="#6f90d8" stroke-opacity="0.35" stroke-width="1"/><path d="M675.2 610.6 L950.5 701.5" stroke="#7aa0dc" stroke-opacity="0.39" stroke-width="1"/><path d="M692.6 622.7 L951.8 705.3" stroke="#6f90d8" stroke-opacity="0.32" stroke-width="1"/><path d="M673.7 616.0 L955.9 704.1" stroke="#8fb4e4" stroke-opacity="0.38" stroke-width="1"/><path d="M683.1 619.3 L953.2 705.5" stroke="#7aa0dc" stroke-opacity="0.11" stroke-width="1"/><path d="M681.4 616.1 L949.1 705.8" stroke="#6f90d8" stroke-opacity="0.15" stroke-width="1"/><path d="M656.9 612.9 L949.5 700.9" stroke="#8fb4e4" stroke-opacity="0.14" stroke-width="1"/><path d="M698.6 613.1 L952.4 703.4" stroke="#6f90d8" stroke-opacity="0.21" stroke-width="1"/><path d="M682.5 615.4 L949.6 706.8" stroke="#8fb4e4" stroke-opacity="0.10" stroke-width="1"/><path d="M817.8 575.3 L955.3 705.3" stroke="#7390d8" stroke-opacity="0.30" stroke-width="1"/><path d="M805.4 582.0 L950.2 704.1" stroke="#8aa6e0" stroke-opacity="0.43" stroke-width="1"/><path d="M817.8 575.1 L951.3 706.2" stroke="#8aa6e0" stroke-opacity="0.33" stroke-width="1"/><path d="M803.1 579.1 L950.9 703.8" stroke="#7390d8" stroke-opacity="0.19" stroke-width="1"/><path d="M816.0 572.8 L955.5 700.5" stroke="#7390d8" stroke-opacity="0.16" stroke-width="1"/><path d="M799.1 593.5 L952.6 703.5" stroke="#8aa6e0" stroke-opacity="0.44" stroke-width="1"/><path d="M814.5 575.9 L950.9 707.2" stroke="#8aa6e0" stroke-opacity="0.42" stroke-width="1"/><path d="M810.7 582.0 L949.8 700.6" stroke="#8aa6e0" stroke-opacity="0.43" stroke-width="1"/><path d="M815.5 572.4 L951.8 701.4" stroke="#8aa6e0" stroke-opacity="0.33" stroke-width="1"/><path d="M796.9 576.8 L948.7 703.2" stroke="#8aa6e0" stroke-opacity="0.28" stroke-width="1"/><path d="M814.2 573.4 L947.8 703.9" stroke="#8aa6e0" stroke-opacity="0.40" stroke-width="1"/><path d="M798.2 588.2 L951.8 705.0" stroke="#7390d8" stroke-opacity="0.32" stroke-width="1"/><path d="M680.0 618.0 L953.0 705.0" stroke="#8cc3e8" stroke-opacity="0.70" stroke-width="1"/><path d="M670.0 622.0 L950.0 702.0" stroke="#9ccbea" stroke-opacity="0.45" stroke-width="1"/><ellipse cx="668" cy="606" rx="62" ry="46" fill="url(#halo)"/><ellipse cx="806" cy="584" rx="40" ry="32" fill="url(#halo)"/><ellipse cx="950" cy="702" rx="30" ry="26" fill="url(#halo2)"/><ellipse cx="671" cy="612" rx="50" ry="36" fill="url(#blob)"/></g></svg>
<div class="t" style="left:648.07px;top:582.2px;font-size:8.4px;line-height:8.4px;color:#1a1c21;font-weight:700;text-shadow:0 0 2px #fff,0 0 2px #fff,0 0 3px #fff;opacity:0.3">NORTH</div>
<div class="t" style="left:643.41px;top:592.5px;font-size:8.4px;line-height:8.4px;color:#1a1c21;font-weight:700;text-shadow:0 0 2px #fff,0 0 2px #fff,0 0 3px #fff;opacity:0.3">AMERICA</div>
<div class="t" style="left:880.76px;top:587.1px;font-size:8.4px;line-height:8.4px;color:#1a1c21;font-weight:700;text-shadow:0 0 2px #fff,0 0 2px #fff,0 0 3px #fff">ASIA</div>
<div class="t" style="left:792.94px;top:642.8px;font-size:8.4px;line-height:8.4px;color:#1a1c21;font-weight:700;text-shadow:0 0 2px #fff,0 0 2px #fff,0 0 3px #fff">AFRICA</div>
<div class="t" style="left:703.7px;top:675.7px;font-size:8.4px;line-height:8.4px;color:#1a1c21;font-weight:700;text-shadow:0 0 2px #fff,0 0 2px #fff,0 0 3px #fff">SOUTH</div>
<div class="t" style="left:698.81px;top:685.9px;font-size:8.4px;line-height:8.4px;color:#1a1c21;font-weight:700;text-shadow:0 0 2px #fff,0 0 2px #fff,0 0 3px #fff">AMERICA</div>
<div class="t" style="left:928.84px;top:677.5px;font-size:8.4px;line-height:8.4px;color:#1a1c21;font-weight:700;text-shadow:0 0 2px #fff,0 0 2px #fff,0 0 3px #fff">OCEANIA</div>
<div class="a" style="left:587.7px;top:505.3px;width:20.3px;height:40px;background:#fff;border-radius:4px;box-shadow:0 1px 3px rgba(0,0,0,.18),0 0 0 .5px rgba(0,0,0,.06)"></div>
<div class="a" style="left:587.7px;top:550.3px;width:20.3px;height:19.7px;background:#fff;border-radius:4px;box-shadow:0 1px 3px rgba(0,0,0,.18),0 0 0 .5px rgba(0,0,0,.06)"></div>
<div class="a" style="left:587.7px;top:575px;width:20.3px;height:19.7px;background:#fff;border-radius:4px;box-shadow:0 1px 3px rgba(0,0,0,.18),0 0 0 .5px rgba(0,0,0,.06)"></div>
<div class="a" style="left:587.7px;top:599.8px;width:20.3px;height:19.7px;background:#fff;border-radius:4px;box-shadow:0 1px 3px rgba(0,0,0,.18),0 0 0 .5px rgba(0,0,0,.06)"></div>
<div class="a" style="left:995.1px;top:505.2px;width:20.4px;height:20.3px;background:#fff;border-radius:4px;box-shadow:0 1px 3px rgba(0,0,0,.18),0 0 0 .5px rgba(0,0,0,.06)"></div>
<svg class="a" style="left:0;top:0" width="1024" height="798"><circle cx="597.8" cy="515.2" r="4.6" fill="#1a1c21"/><path d="M597.8 512.6V517.8M595.2 515.2H600.4" stroke="#fff" stroke-width="1.1"/><circle cx="597.8" cy="535.1" r="4.6" fill="#1a1c21"/><path d="M595.2 535.1H600.4" stroke="#fff" stroke-width="1.1"/><circle cx="597.8" cy="560.2" r="3.6" stroke="#535966" stroke-width=".8" fill="none"/><path d="M597.8 555.6V557.2M597.8 563.2V564.8M593.2 560.2H594.8M600.8 560.2H602.4" stroke="#535966" stroke-width=".8"/><circle cx="597.8" cy="560.2" r=".6" fill="#535966"/><path d="M594 588.8L601.6 581.2M594 586V588.8H596.8M598.8 581.2H601.6V584" stroke="#535966" stroke-width=".8" fill="none"/><path d="M594.3 605.5a2.3 2.3 0 1 0 3.2 3.2l3.6 3.6a1.2 1.2 0 0 0 1.7-1.7l-3.6-3.6a2.3 2.3 0 0 0-3.2-3.2l1.5 1.5-.3 1.8-1.8.3z" stroke="#535966" stroke-width=".8" fill="none"/><path d="M1001.2 515.4L1003.2 513.6M1001.2 515.4L1003.2 517.2M1001.2 515.4H1005M1004.4 512.8H1009.8M1005.6 515.4H1009.8M1004.4 518H1009.8" stroke="#535966" stroke-width=".8" fill="none"/></svg>
<div class="t" style="left:980.5px;top:760.55px;font-size:6.45px;line-height:6.45px;color:#1a1c21;font-weight:700;">zoom:</div>
<div class="t" style="left:1001.3px;top:760.13px;font-size:7.3px;line-height:7.3px;color:#535966;">0.38</div>
<div class="t" style="left:778.9px;top:776.23px;font-size:6.91px;line-height:6.91px;color:#343741;">Elastic Maps Service</div>
<div class="t" style="left:856.9px;top:776.21px;font-size:6.93px;line-height:6.93px;color:#343741;">OpenMapTiles</div>
<div class="t" style="left:915.5px;top:776.11px;font-size:7.14px;line-height:7.14px;color:#343741;">OpenStreetMap contributors</div>
<svg class="a" style="left:845.8px;top:775.6px" width="8" height="8"><path d="M1.2 1.6H3M1.2 1.6V6.6H6.2V4.6M4.2 1.2H7V4M7 1.2L3.6 4.6" stroke="#69707d" stroke-width=".7" fill="none"/></svg>
<svg class="a" style="left:904.6px;top:775.6px" width="8" height="8"><path d="M1.2 1.6H3M1.2 1.6V6.6H6.2V4.6M4.2 1.2H7V4M7 1.2L3.6 4.6" stroke="#69707d" stroke-width=".7" fill="none"/></svg>
<svg class="a" style="left:1008px;top:775.6px" width="8" height="8"><path d="M1.2 1.6H3M1.2 1.6V6.6H6.2V4.6M4.2 1.2H7V4M7 1.2L3.6 4.6" stroke="#69707d" stroke-width=".7" fill="none"/></svg>
<div class="t" style="left:853.6px;top:777.58px;font-size:7px;line-height:7px;color:#343741;">,</div>
<div class="t" style="left:912.4px;top:777.58px;font-size:7px;line-height:7px;color:#343741;">,</div>
<div class="a" style="left:1004px;top:134.2px;width:18.6px;height:344.6px;background:linear-gradient(to right,rgba(0,0,0,0),rgba(0,0,0,.045));border-radius:0 5px 5px 0"></div>
<div class="a" style="left:1004px;top:482.9px;width:18.6px;height:309.1px;background:linear-gradient(to right,rgba(0,0,0,0),rgba(0,0,0,.05));border-radius:0 5px 5px 0"></div>
</body></html>
